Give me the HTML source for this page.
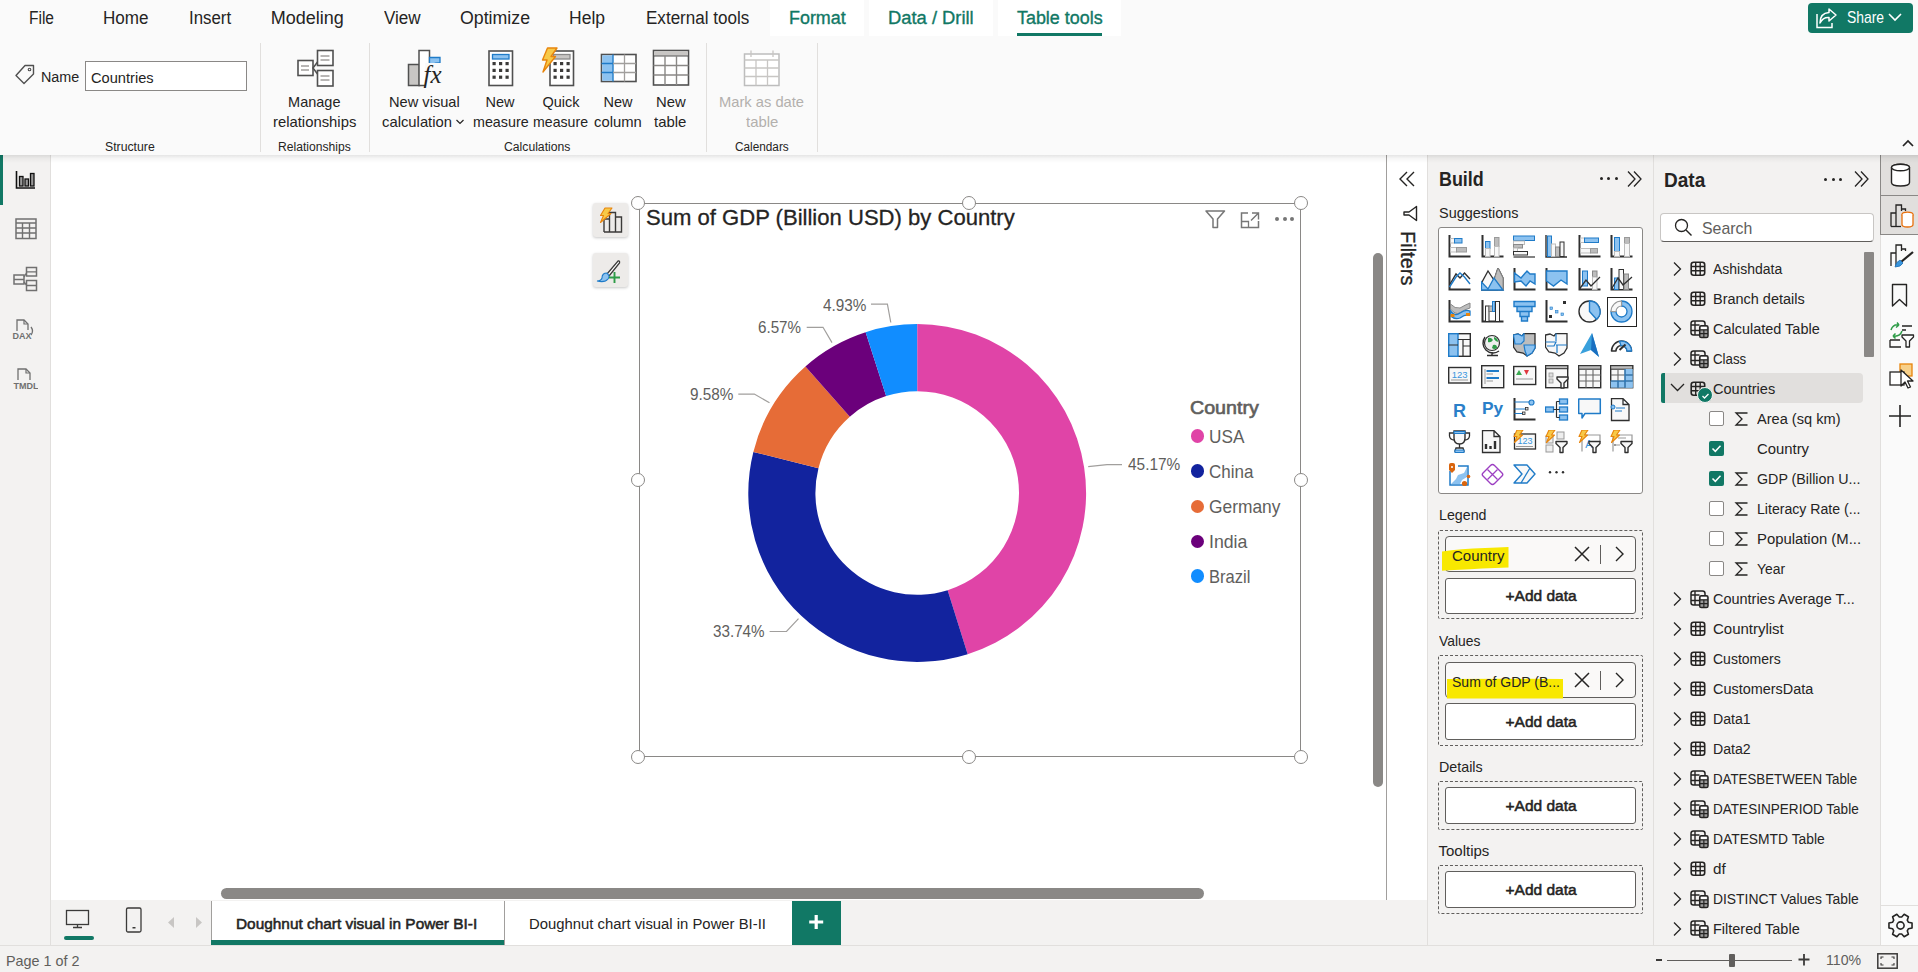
<!DOCTYPE html><html><head><meta charset="utf-8"><style>html,body{margin:0;padding:0;width:1918px;height:972px;overflow:hidden;background:#fff;font-family:"Liberation Sans",sans-serif;position:relative}div,svg{box-sizing:border-box}</style></head><body>
<div style="position:absolute;left:0px;top:0px;width:1918px;height:155px;background:#FAFAFA;z-index:2"></div>
<div style="position:absolute;left:0;top:0;width:1918px;height:155px;z-index:3">
<div style="position:absolute;left:770px;top:0px;width:94px;height:36px;background:#fff"></div>
<div style="position:absolute;left:869px;top:0px;width:124px;height:36px;background:#fff"></div>
<div style="position:absolute;left:998px;top:0px;width:123px;height:36px;background:#fff"></div>
<div style="position:absolute;left:1017px;top:33px;width:85px;height:3px;background:#117865"></div>
<div style="position:absolute;left:29.00px;top:7.16px;font-size:18px;line-height:22px;white-space:nowrap;color:#252423;transform:scaleX(0.8620);transform-origin:0 0;">File</div>
<div style="position:absolute;left:102.50px;top:7.16px;font-size:18px;line-height:22px;white-space:nowrap;color:#252423;transform:scaleX(0.9477);transform-origin:0 0;">Home</div>
<div style="position:absolute;left:188.50px;top:7.16px;font-size:18px;line-height:22px;white-space:nowrap;color:#252423;transform:scaleX(0.9353);transform-origin:0 0;">Insert</div>
<div style="position:absolute;left:270.70px;top:7.16px;font-size:18px;line-height:22px;white-space:nowrap;color:#252423;">Modeling</div>
<div style="position:absolute;left:384.00px;top:7.16px;font-size:18px;line-height:22px;white-space:nowrap;color:#252423;transform:scaleX(0.9486);transform-origin:0 0;">View</div>
<div style="position:absolute;left:460.00px;top:7.16px;font-size:18px;line-height:22px;white-space:nowrap;color:#252423;transform:scaleX(0.9857);transform-origin:0 0;">Optimize</div>
<div style="position:absolute;left:569.00px;top:7.16px;font-size:18px;line-height:22px;white-space:nowrap;color:#252423;transform:scaleX(0.9725);transform-origin:0 0;">Help</div>
<div style="position:absolute;left:646.00px;top:7.16px;font-size:18px;line-height:22px;white-space:nowrap;color:#252423;transform:scaleX(0.9473);transform-origin:0 0;">External tools</div>
<div style="position:absolute;left:789.00px;top:7.16px;font-size:18px;line-height:22px;white-space:nowrap;color:#117865;transform:scaleX(0.9947);transform-origin:0 0;-webkit-text-stroke:0.35px #117865;">Format</div>
<div style="position:absolute;left:888.30px;top:7.16px;font-size:18px;line-height:22px;white-space:nowrap;color:#117865;transform:scaleX(1.0201);transform-origin:0 0;-webkit-text-stroke:0.35px #117865;">Data / Drill</div>
<div style="position:absolute;left:1016.70px;top:7.16px;font-size:18px;line-height:22px;white-space:nowrap;color:#117865;transform:scaleX(0.9948);transform-origin:0 0;-webkit-text-stroke:0.35px #117865;">Table tools</div>
<div style="position:absolute;left:260px;top:43px;width:1px;height:109px;background:#E1DFDD"></div>
<div style="position:absolute;left:369px;top:43px;width:1px;height:109px;background:#E1DFDD"></div>
<div style="position:absolute;left:706px;top:43px;width:1px;height:109px;background:#E1DFDD"></div>
<div style="position:absolute;left:817px;top:43px;width:1px;height:109px;background:#E1DFDD"></div>
<div style="position:absolute;left:40.70px;top:67.33px;font-size:15.5px;line-height:19px;white-space:nowrap;color:#252423;transform:scaleX(0.9264);transform-origin:0 0;">Name</div>
<div style="position:absolute;left:85px;top:61px;width:162px;height:30px;background:#fff;border:1px solid #8A8886"></div>
<div style="position:absolute;left:90.70px;top:68.33px;font-size:15.5px;line-height:19px;white-space:nowrap;color:#252423;transform:scaleX(0.9437);transform-origin:0 0;">Countries</div>
<div style="position:absolute;left:288.10px;top:92.98px;font-size:14.5px;line-height:18px;white-space:nowrap;color:#252423;">Manage</div>
<div style="position:absolute;left:272.70px;top:112.58px;font-size:14.5px;line-height:18px;white-space:nowrap;color:#252423;transform:scaleX(1.0233);transform-origin:0 0;">relationships</div>
<div style="position:absolute;left:389.30px;top:92.98px;font-size:14.5px;line-height:18px;white-space:nowrap;color:#252423;transform:scaleX(1.0085);transform-origin:0 0;">New visual</div>
<div style="position:absolute;left:382.30px;top:112.58px;font-size:14.5px;line-height:18px;white-space:nowrap;color:#252423;transform:scaleX(1.0217);transform-origin:0 0;">calculation</div>
<div style="position:absolute;left:485.50px;top:92.98px;font-size:14.5px;line-height:18px;white-space:nowrap;color:#252423;">New</div>
<div style="position:absolute;left:472.70px;top:112.58px;font-size:14.5px;line-height:18px;white-space:nowrap;color:#252423;transform:scaleX(0.9856);transform-origin:0 0;">measure</div>
<div style="position:absolute;left:542.47px;top:92.98px;font-size:14.5px;line-height:18px;white-space:nowrap;color:#252423;">Quick</div>
<div style="position:absolute;left:533.30px;top:112.58px;font-size:14.5px;line-height:18px;white-space:nowrap;color:#252423;transform:scaleX(0.9750);transform-origin:0 0;">measure</div>
<div style="position:absolute;left:603.50px;top:92.98px;font-size:14.5px;line-height:18px;white-space:nowrap;color:#252423;">New</div>
<div style="position:absolute;left:594.30px;top:112.58px;font-size:14.5px;line-height:18px;white-space:nowrap;color:#252423;transform:scaleX(1.0205);transform-origin:0 0;">column</div>
<div style="position:absolute;left:656.00px;top:92.98px;font-size:14.5px;line-height:18px;white-space:nowrap;color:#252423;transform:scaleX(1.0239);transform-origin:0 0;">New</div>
<div style="position:absolute;left:654.30px;top:112.58px;font-size:14.5px;line-height:18px;white-space:nowrap;color:#252423;transform:scaleX(1.0305);transform-origin:0 0;">table</div>
<div style="position:absolute;left:719.30px;top:92.98px;font-size:14.5px;line-height:18px;white-space:nowrap;color:#B3B0AD;transform:scaleX(1.0142);transform-origin:0 0;">Mark as date</div>
<div style="position:absolute;left:745.70px;top:112.58px;font-size:14.5px;line-height:18px;white-space:nowrap;color:#B3B0AD;transform:scaleX(1.0274);transform-origin:0 0;">table</div>
<div style="position:absolute;left:105.00px;top:138.67px;font-size:12.5px;line-height:16px;white-space:nowrap;color:#252423;transform:scaleX(0.9801);transform-origin:0 0;">Structure</div>
<div style="position:absolute;left:278.30px;top:138.67px;font-size:12.5px;line-height:16px;white-space:nowrap;color:#252423;transform:scaleX(0.9688);transform-origin:0 0;">Relationships</div>
<div style="position:absolute;left:504.30px;top:138.67px;font-size:12.5px;line-height:16px;white-space:nowrap;color:#252423;transform:scaleX(0.9752);transform-origin:0 0;">Calculations</div>
<div style="position:absolute;left:735.00px;top:138.67px;font-size:12.5px;line-height:16px;white-space:nowrap;color:#252423;transform:scaleX(0.9426);transform-origin:0 0;">Calendars</div>
<div style="position:absolute;left:1808px;top:3px;width:105px;height:30px;background:#117865;border-radius:4px"></div>
<div style="position:absolute;left:1846.60px;top:7.11px;font-size:17px;line-height:21px;white-space:nowrap;color:#fff;transform:scaleX(0.8179);transform-origin:0 0;">Share</div>
<svg style="position:absolute;left:14px;top:64px;" width="22" height="22" viewBox="0 0 22 22"><path d="M11,1.5 H19.5 V10 L10,19.5 L2,11.5 Z" fill="none" stroke="#505050" stroke-width="1.4" stroke-linejoin="round" transform="rotate(0)"/><circle cx="15.5" cy="5.5" r="1.3" fill="none" stroke="#505050" stroke-width="1.1"/><path d="M4,13.5 L12,5.5 M6,15.5 L14,7.5" stroke="#505050" stroke-width="0" /></svg>
<svg style="position:absolute;left:296px;top:49px;" width="39" height="39" viewBox="0 0 39 39"><rect x="2" y="11.5" width="15" height="15" fill="#fff" stroke="#505050" stroke-width="1.6"/><rect x="21.5" y="1.5" width="15.5" height="15" fill="#fff" stroke="#505050" stroke-width="1.6"/><rect x="21.5" y="21.5" width="15.5" height="15.5" fill="#fff" stroke="#505050" stroke-width="1.6"/><path d="M5,17 H13 M5,21 H13 M24.5,7 H33.5 M24.5,11 H33.5 M24.5,27 H33.5 M24.5,31 H33.5" stroke="#A19F9D" stroke-width="1.4"/><path d="M21.5,13 L17,19 L21.5,25" fill="none" stroke="#505050" stroke-width="1.5"/></svg>
<svg style="position:absolute;left:406px;top:48px;" width="40" height="40" viewBox="0 0 40 40"><rect x="2.5" y="16.5" width="11" height="21" fill="#C8C6C4" stroke="#505050" stroke-width="1.5"/><rect x="13" y="2.5" width="10.5" height="35" fill="#fff" stroke="#505050" stroke-width="1.5"/><path d="M23.5,9.5 H34 V15 Q28,14 23.5,19 Z" fill="#8CC2F0" stroke="#1F7BC8" stroke-width="1.3"/><rect x="19" y="15" width="21" height="25" fill="#FAFAFA"/><text x="17.5" y="34.5" font-family="Liberation Serif" font-style="italic" font-size="25" fill="#252423">fx</text></svg>
<svg style="position:absolute;left:487.5px;top:49.5px;" width="26" height="37" viewBox="0 0 26 37"><rect x="1" y="1" width="23.5" height="34.5" fill="#fff" stroke="#505050" stroke-width="1.6"/><rect x="4.5" y="4.5" width="16.5" height="4.5" fill="#8CC2F0" stroke="#1F7BC8" stroke-width="1.3"/><rect x="4.5" y="12.0" width="3.2" height="3.2" fill="#3B3A39"/><rect x="11.0" y="12.0" width="3.2" height="3.2" fill="#3B3A39"/><rect x="17.5" y="12.0" width="3.2" height="3.2" fill="#3B3A39"/><rect x="4.5" y="18.8" width="3.2" height="3.2" fill="#3B3A39"/><rect x="11.0" y="18.8" width="3.2" height="3.2" fill="#3B3A39"/><rect x="17.5" y="18.8" width="3.2" height="3.2" fill="#3B3A39"/><rect x="4.5" y="25.6" width="3.2" height="3.2" fill="#3B3A39"/><rect x="11.0" y="25.6" width="3.2" height="3.2" fill="#3B3A39"/><rect x="17.5" y="25.6" width="3.2" height="3.2" fill="#3B3A39"/></svg>
<svg style="position:absolute;left:548.5px;top:49.5px;" width="26" height="37" viewBox="0 0 26 37"><rect x="1" y="1" width="23.5" height="34.5" fill="#fff" stroke="#505050" stroke-width="1.6"/><rect x="4.5" y="4.5" width="16.5" height="4.5" fill="#C8C6C4" stroke="#8a8a8a" stroke-width="1.3"/><rect x="4.5" y="12.0" width="3.2" height="3.2" fill="#3B3A39"/><rect x="11.0" y="12.0" width="3.2" height="3.2" fill="#3B3A39"/><rect x="17.5" y="12.0" width="3.2" height="3.2" fill="#3B3A39"/><rect x="4.5" y="18.8" width="3.2" height="3.2" fill="#3B3A39"/><rect x="11.0" y="18.8" width="3.2" height="3.2" fill="#3B3A39"/><rect x="17.5" y="18.8" width="3.2" height="3.2" fill="#3B3A39"/><rect x="4.5" y="25.6" width="3.2" height="3.2" fill="#3B3A39"/><rect x="11.0" y="25.6" width="3.2" height="3.2" fill="#3B3A39"/><rect x="17.5" y="25.6" width="3.2" height="3.2" fill="#3B3A39"/></svg>
<svg style="position:absolute;left:541px;top:47px;" width="18" height="27" viewBox="0 0 18 27"><path d="M6.5,1 H16 L10,9.5 H14.5 L2,25 L6,13 H1.5 Z" fill="#F7C948" stroke="#E8850C" stroke-width="1.4" stroke-linejoin="round"/></svg>
<svg style="position:absolute;left:600px;top:53px;" width="38" height="30" viewBox="0 0 38 30"><rect x="1.5" y="1.5" width="34.5" height="27" fill="#fff" stroke="#505050" stroke-width="1.6"/><rect x="2.3" y="2.3" width="10.5" height="25.5" fill="#8CC2F0"/><path d="M13,1.5 V28.5" stroke="#1F7BC8" stroke-width="1.4"/><path d="M1.5,10.5 H13 M1.5,19.5 H13" stroke="#1F7BC8" stroke-width="1.4"/><path d="M13,10.5 H36 M13,19.5 H36 M24.5,1.5 V28.5" stroke="#A19F9D" stroke-width="1.3"/></svg>
<svg style="position:absolute;left:652px;top:49px;" width="38" height="38" viewBox="0 0 38 38"><rect x="1.5" y="1.5" width="35" height="34.5" fill="#fff" stroke="#505050" stroke-width="1.6"/><rect x="2.3" y="2.3" width="33.5" height="4.5" fill="#C8C6C4"/><path d="M1.5,7 H36.5" stroke="#505050" stroke-width="1.2"/><path d="M1.5,16.5 H36.5 M1.5,26 H36.5 M13,7 V36 M24.5,7 V36" stroke="#8A8886" stroke-width="1.4"/></svg>
<svg style="position:absolute;left:743px;top:49px;" width="38" height="38" viewBox="0 0 38 38"><rect x="1.5" y="5" width="34.5" height="31.5" fill="#fff" stroke="#BDBDBD" stroke-width="1.5"/><path d="M1.5,11 H36 M1.5,19 H36 M1.5,27.5 H36 M13,11 V36.5 M24.5,11 V36.5 M8,1.5 V8 M30,1.5 V8" stroke="#C8C6C4" stroke-width="1.3"/></svg>
<svg style="position:absolute;left:455px;top:118px;" width="10" height="8" viewBox="0 0 10 8"><path d="M1.5,2 L5,5.5 L8.5,2" fill="none" stroke="#252423" stroke-width="1.2"/></svg>
<svg style="position:absolute;left:1815px;top:6px;" width="24" height="24" viewBox="0 0 24 24"><path d="M2,8 V21.5 H17 V17" fill="none" stroke="#fff" stroke-width="1.5"/><path d="M14,3 L21,9 L14,15 V11.5 Q8,11 5,17 Q5,7 14,6.5 Z" fill="none" stroke="#fff" stroke-width="1.5" stroke-linejoin="round"/></svg>
<svg style="position:absolute;left:1887px;top:12px;" width="16" height="10" viewBox="0 0 16 10"><path d="M2,2 L8,8 L14,2" fill="none" stroke="#fff" stroke-width="1.6"/></svg>
<svg style="position:absolute;left:1901px;top:138px;" width="14" height="10" viewBox="0 0 14 10"><path d="M2,8 L7,3 L12,8" fill="none" stroke="#252423" stroke-width="1.7"/></svg>
</div>
<div style="position:absolute;left:0px;top:155px;width:51px;height:790px;background:#F3F2F1;border-right:1px solid #E1DFDD"></div>
<div style="position:absolute;left:0px;top:155px;width:3px;height:50px;background:#117865"></div>
<svg style="position:absolute;left:15px;top:170px;" width="21" height="20" viewBox="0 0 21 20"><path d="M1.5,1 V18 H20" fill="none" stroke="#111" stroke-width="1.6"/><rect x="4.5" y="6.5" width="3.5" height="9.5" fill="#999" stroke="#111" stroke-width="1.3"/><rect x="10" y="9" width="3.5" height="7" fill="#999" stroke="#111" stroke-width="1.3"/><rect x="15.5" y="3.5" width="3.5" height="12.5" fill="#999" stroke="#111" stroke-width="1.3"/></svg>
<svg style="position:absolute;left:15px;top:218px;" width="22" height="22" viewBox="0 0 22 22"><rect x="1" y="1" width="20" height="19.5" fill="none" stroke="#707070" stroke-width="1.5"/><path d="M1,5 H21 M1,10 H21 M1,15 H21 M7.5,5 V20.5 M14.5,5 V20.5" stroke="#707070" stroke-width="1.4"/></svg>
<svg style="position:absolute;left:13px;top:266px;" width="26" height="26" viewBox="0 0 26 26"><rect x="1" y="9" width="10" height="9" fill="none" stroke="#707070" stroke-width="1.5"/><rect x="13.5" y="1.5" width="10" height="8.5" fill="none" stroke="#707070" stroke-width="1.5"/><rect x="13.5" y="14.5" width="10" height="10" fill="none" stroke="#707070" stroke-width="1.5"/><path d="M1,13.5 H11 M13.5,5.8 H23.5 M13.5,19.5 H23.5 M11,11 L13.5,7 M11,16 L13.5,19" stroke="#707070" stroke-width="1.3"/></svg>
<svg style="position:absolute;left:12px;top:318px;" width="24" height="22" viewBox="0 0 24 22"><path d="M5,13 V2 H12 L16,6 V12" fill="none" stroke="#707070" stroke-width="1.3"/><path d="M12,2 V6 H16" fill="none" stroke="#707070" stroke-width="1.2"/><path d="M19,9 Q22,13 19,17" fill="none" stroke="#707070" stroke-width="1.3"/><text x="0.5" y="21" font-family="Liberation Sans" font-weight="bold" font-size="9" fill="#707070">DAX</text></svg>
<svg style="position:absolute;left:13px;top:361px;" width="25" height="30" viewBox="0 0 25 30"><path d="M5,19 V8 H13 L17,12 V19" fill="none" stroke="#707070" stroke-width="1.3"/><path d="M13,8 V12 H17" fill="none" stroke="#707070" stroke-width="1.2"/><text x="0.5" y="28" font-family="Liberation Sans" font-weight="bold" font-size="9" fill="#707070">TMDL</text></svg>
<div style="position:absolute;left:51px;top:900px;width:1376px;height:45px;background:#F3F2F1"></div>
<div style="position:absolute;left:0px;top:945px;width:1918px;height:27px;background:#F3F2F1;border-top:1px solid #E1DFDD"></div>
<svg style="position:absolute;left:64px;top:908px;" width="28" height="22" viewBox="0 0 28 22"><rect x="2.5" y="2.5" width="22" height="14" fill="none" stroke="#3B3A39" stroke-width="1.3"/><path d="M13.5,16.5 V19.5 M9,19.5 H18" stroke="#3B3A39" stroke-width="1.3"/></svg>
<div style="position:absolute;left:64px;top:936px;width:30px;height:3.5px;background:#117865;border-radius:2px"></div>
<svg style="position:absolute;left:124px;top:906px;" width="19" height="28" viewBox="0 0 19 28"><rect x="2.5" y="2" width="14.5" height="24" rx="1.5" fill="none" stroke="#3B3A39" stroke-width="1.3"/><rect x="8.5" y="21" width="3" height="1.5" fill="#3B3A39"/></svg>
<svg style="position:absolute;left:166px;top:916px;" width="10" height="13" viewBox="0 0 10 13"><path d="M8,1 L2,6.5 L8,12 Z" fill="#C8C6C4"/></svg>
<svg style="position:absolute;left:194px;top:916px;" width="10" height="13" viewBox="0 0 10 13"><path d="M2,1 L8,6.5 L2,12 Z" fill="#C8C6C4"/></svg>
<div style="position:absolute;left:210.5px;top:901px;width:293.0px;height:44px;background:#fff;border-left:1px solid #A19F9D"></div>
<div style="position:absolute;left:210.5px;top:940px;width:293.0px;height:5px;background:#117865"></div>
<div style="position:absolute;left:236.00px;top:913.93px;font-size:15.5px;line-height:19px;white-space:nowrap;color:#252423;transform:scaleX(0.9928);transform-origin:0 0;-webkit-text-stroke:0.55px #252423;">Doughnut chart visual in Power BI-I</div>
<div style="position:absolute;left:503.5px;top:901px;width:288.0px;height:44px;background:#fff;border-left:1px solid #A19F9D"></div>
<div style="position:absolute;left:528.90px;top:913.93px;font-size:15.5px;line-height:19px;white-space:nowrap;color:#252423;transform:scaleX(0.9582);transform-origin:0 0;">Doughnut chart visual in Power BI-II</div>
<div style="position:absolute;left:791.5px;top:901px;width:49.5px;height:44px;background:#117865"></div>
<svg style="position:absolute;left:806px;top:912px;" width="20" height="20" viewBox="0 0 20 20"><path d="M10.2,3 V17 M3.2,10 H17.2" stroke="#fff" stroke-width="3.2"/></svg>
<div style="position:absolute;left:1656px;top:959px;width:5.5px;height:2px;background:#3B3A39"></div>
<div style="position:absolute;left:1667px;top:959.5px;width:125px;height:1.5px;background:#605E5C"></div>
<div style="position:absolute;left:1729px;top:954px;width:5.5px;height:13px;background:#605E5C;border-radius:1px"></div>
<svg style="position:absolute;left:1798px;top:953px;" width="12" height="13" viewBox="0 0 12 13"><path d="M6,1 V12.5 M0.5,6.5 H11.5" stroke="#3B3A39" stroke-width="1.8"/></svg>
<div style="position:absolute;left:1826.20px;top:950.30px;font-size:15px;line-height:19px;white-space:nowrap;color:#605E5C;transform:scaleX(0.9423);transform-origin:0 0;">110%</div>
<svg style="position:absolute;left:1877px;top:953px;" width="21" height="16" viewBox="0 0 21 16"><rect x="0.8" y="0.8" width="19.4" height="14.4" fill="none" stroke="#3B3A39" stroke-width="1.5"/><path d="M4,6 V4 H6.5 M14.5,4 H17 V6 M17,10 V12 H14.5 M6.5,12 H4 V10" fill="none" stroke="#3B3A39" stroke-width="1.1"/></svg>
<div style="position:absolute;left:5.50px;top:952.48px;font-size:14.5px;line-height:18px;white-space:nowrap;color:#605E5C;transform:scaleX(0.9910);transform-origin:0 0;">Page 1 of 2</div>
<svg style="position:absolute;left:0px;top:0px;" width="1918" height="972" viewBox="0 0 1918 972"><path d="M917.20,324.10 A168.9,168.9 0 0 1 967.67,654.18 L947.62,590.15 A101.8,101.8 0 0 0 917.20,391.20 Z" fill="#E044A7"/><path d="M967.67,654.18 A168.9,168.9 0 0 1 753.37,451.92 L818.46,468.24 A101.8,101.8 0 0 0 947.62,590.15 Z" fill="#12239E"/><path d="M753.37,451.92 A168.9,168.9 0 0 1 805.42,366.38 L849.83,416.68 A101.8,101.8 0 0 0 818.46,468.24 Z" fill="#E66C37"/><path d="M805.42,366.38 A168.9,168.9 0 0 1 865.61,332.17 L886.11,396.06 A101.8,101.8 0 0 0 849.83,416.68 Z" fill="#6B007B"/><path d="M865.61,332.17 A168.9,168.9 0 0 1 917.09,324.10 L917.14,391.20 A101.8,101.8 0 0 0 886.11,396.06 Z" fill="#118DFF"/><polyline points="871,304.2 887.4,304.2 890.8,322.5" fill="none" stroke="#A19F9D" stroke-width="1.2"/><polyline points="806.7,327.3 823,327.3 832,342.6" fill="none" stroke="#A19F9D" stroke-width="1.2"/><polyline points="738.3,394.1 754.3,394.1 769.5,402.8" fill="none" stroke="#A19F9D" stroke-width="1.2"/><polyline points="769.6,631.5 786.5,631.5 798.5,618.7" fill="none" stroke="#A19F9D" stroke-width="1.2"/><polyline points="1088.2,466.7 1107,464.6 1122,464.6" fill="none" stroke="#A19F9D" stroke-width="1.2"/></svg>
<div style="position:absolute;left:822.60px;top:296.16px;font-size:16px;line-height:20px;white-space:nowrap;color:#605E5C;transform:scaleX(0.9567);transform-origin:0 0;">4.93%</div>
<div style="position:absolute;left:758.00px;top:318.06px;font-size:16px;line-height:20px;white-space:nowrap;color:#605E5C;transform:scaleX(0.9479);transform-origin:0 0;">6.57%</div>
<div style="position:absolute;left:689.50px;top:385.36px;font-size:16px;line-height:20px;white-space:nowrap;color:#605E5C;transform:scaleX(0.9567);transform-origin:0 0;">9.58%</div>
<div style="position:absolute;left:1127.50px;top:455.46px;font-size:16px;line-height:20px;white-space:nowrap;color:#605E5C;transform:scaleX(0.9638);transform-origin:0 0;">45.17%</div>
<div style="position:absolute;left:712.50px;top:622.16px;font-size:16px;line-height:20px;white-space:nowrap;color:#605E5C;transform:scaleX(0.9509);transform-origin:0 0;">33.74%</div>
<div style="position:absolute;left:1190.20px;top:396.74px;font-size:17.5px;line-height:22px;white-space:nowrap;color:#605E5C;transform:scaleX(1.1229);transform-origin:0 0;-webkit-text-stroke:0.6px #605E5C;">Country</div>
<div style="position:absolute;left:1191.1px;top:429.3px;width:13.4px;height:13.4px;border-radius:50%;background:#E044A7"></div>
<div style="position:absolute;left:1208.60px;top:424.89px;font-size:18.5px;line-height:23px;white-space:nowrap;color:#605E5C;transform:scaleX(0.9306);transform-origin:0 0;">USA</div>
<div style="position:absolute;left:1191.1px;top:464.3px;width:13.4px;height:13.4px;border-radius:50%;background:#12239E"></div>
<div style="position:absolute;left:1208.60px;top:459.89px;font-size:18.5px;line-height:23px;white-space:nowrap;color:#605E5C;transform:scaleX(0.9186);transform-origin:0 0;">China</div>
<div style="position:absolute;left:1191.1px;top:499.6px;width:13.4px;height:13.4px;border-radius:50%;background:#E66C37"></div>
<div style="position:absolute;left:1208.60px;top:495.19px;font-size:18.5px;line-height:23px;white-space:nowrap;color:#605E5C;transform:scaleX(0.9386);transform-origin:0 0;">Germany</div>
<div style="position:absolute;left:1191.1px;top:534.5999999999999px;width:13.4px;height:13.4px;border-radius:50%;background:#6B007B"></div>
<div style="position:absolute;left:1208.60px;top:530.19px;font-size:18.5px;line-height:23px;white-space:nowrap;color:#605E5C;transform:scaleX(0.9573);transform-origin:0 0;">India</div>
<div style="position:absolute;left:1191.1px;top:569.1999999999999px;width:13.4px;height:13.4px;border-radius:50%;background:#118DFF"></div>
<div style="position:absolute;left:1208.60px;top:564.79px;font-size:18.5px;line-height:23px;white-space:nowrap;color:#605E5C;transform:scaleX(0.8950);transform-origin:0 0;">Brazil</div>
<div style="position:absolute;left:646.25px;top:203.67px;font-size:22.3px;line-height:28px;white-space:nowrap;color:#252423;transform:scaleX(0.9897);transform-origin:0 0;-webkit-text-stroke:0.3px #252423;">Sum of GDP (Billion USD) by Country</div>
<div style="position:absolute;left:638.5px;top:203px;width:662.5px;height:554px;border:1.3px solid #8A8886"></div>
<div style="position:absolute;left:631px;top:196px;width:14px;height:14px;border-radius:50%;background:#fff;border:1.2px solid #8A8886"></div>
<div style="position:absolute;left:631px;top:473px;width:14px;height:14px;border-radius:50%;background:#fff;border:1.2px solid #8A8886"></div>
<div style="position:absolute;left:631px;top:750px;width:14px;height:14px;border-radius:50%;background:#fff;border:1.2px solid #8A8886"></div>
<div style="position:absolute;left:962px;top:196px;width:14px;height:14px;border-radius:50%;background:#fff;border:1.2px solid #8A8886"></div>
<div style="position:absolute;left:962px;top:750px;width:14px;height:14px;border-radius:50%;background:#fff;border:1.2px solid #8A8886"></div>
<div style="position:absolute;left:1294px;top:196px;width:14px;height:14px;border-radius:50%;background:#fff;border:1.2px solid #8A8886"></div>
<div style="position:absolute;left:1294px;top:473px;width:14px;height:14px;border-radius:50%;background:#fff;border:1.2px solid #8A8886"></div>
<div style="position:absolute;left:1294px;top:750px;width:14px;height:14px;border-radius:50%;background:#fff;border:1.2px solid #8A8886"></div>
<div style="position:absolute;left:593px;top:203px;width:34.5px;height:34px;background:#EDEBE9;border-radius:3px;box-shadow:0 1px 3px rgba(0,0,0,0.22)"></div>
<div style="position:absolute;left:593px;top:253px;width:34.5px;height:34px;background:#EDEBE9;border-radius:3px;box-shadow:0 1px 3px rgba(0,0,0,0.22)"></div>
<svg style="position:absolute;left:1205px;top:210px;" width="21" height="19" viewBox="0 0 21 19"><path d="M1,1 H19.5 L12.5,9 V17.5 H8 V9 Z" fill="none" stroke="#767676" stroke-width="1.5" stroke-linejoin="round"/></svg>
<svg style="position:absolute;left:1240px;top:211px;" width="20" height="18" viewBox="0 0 20 18"><path d="M8,2 H1.5 V16.5 H18.5 V10" fill="none" stroke="#767676" stroke-width="1.5"/><path d="M1.5,10.5 H8.5 V16.5" fill="none" stroke="#767676" stroke-width="1.3"/><path d="M12,2 H18.5 V8.5 M18.5,2 L11,9.5" fill="none" stroke="#767676" stroke-width="1.4"/></svg>
<div style="position:absolute;left:1275.0px;top:217px;width:4px;height:4px;border-radius:50%;background:#767676"></div>
<div style="position:absolute;left:1282.5px;top:217px;width:4px;height:4px;border-radius:50%;background:#767676"></div>
<div style="position:absolute;left:1290.0px;top:217px;width:4px;height:4px;border-radius:50%;background:#767676"></div>
<svg style="position:absolute;left:596px;top:207px;" width="30" height="28" viewBox="0 0 30 28"><path d="M8,25 V12 H13.5 V25 M13.5,25 V5.5 H19.5 V25 M19.5,25 V10 H25.5 V25 Z M8,25 H25.5" fill="none" stroke="#3B3A39" stroke-width="1.4"/><path d="M9,1 H16 L12,6.5 H15 L4.5,15.5 L7.5,8.5 H4.5 Z" fill="#F7C948" stroke="#E8850C" stroke-width="1.1" stroke-linejoin="round"/></svg>
<svg style="position:absolute;left:596px;top:259px;" width="30" height="26" viewBox="0 0 30 26"><path d="M11,15 L22,2 Q24,1.5 23.5,4 L13,17" fill="#fff" stroke="#3B3A39" stroke-width="1.3"/><path d="M11,14 Q6,14 6,19 Q5,22 1,22 Q9,24 12,20 Q14,17 12.5,16 Z" fill="#8CC2F0" stroke="#1F7BC8" stroke-width="1.1"/><path d="M18.5,13 V24 M13,18.5 H24" stroke="#2E9C48" stroke-width="1.9"/></svg>
<div style="position:absolute;left:1373px;top:253px;width:10px;height:534px;background:#8A8886;border-radius:5px"></div>
<div style="position:absolute;left:221px;top:888px;width:983px;height:11px;background:#8A8886;border-radius:6px"></div>
<div style="position:absolute;left:1386px;top:155px;width:41px;height:745px;background:#fff;border-left:1px solid #A19F9D"></div>
<div style="position:absolute;left:1427px;top:155px;width:226px;height:790px;background:#F3F2F1;border-left:1px solid #E1DFDD"></div>
<div style="position:absolute;left:1653px;top:155px;width:227px;height:790px;background:#F3F2F1;border-left:1px solid #E1DFDD"></div>
<div style="position:absolute;left:1880px;top:155px;width:38px;height:790px;background:#FAFAFA;border-left:1px solid #E1DFDD"></div>
<svg style="position:absolute;left:1398px;top:170px;" width="20" height="18" viewBox="0 0 20 18"><path d="M9,2 L2,9 L9,16 M16,2 L9,9 L16,16" fill="none" stroke="#252423" stroke-width="1.4"/></svg>
<svg style="position:absolute;left:1402px;top:205px;" width="16" height="17" viewBox="0 0 16 17"><path d="M14.5,1.5 L14.5,15.5 L7,10 L2,10 L2,7 L7,7 Z" fill="none" stroke="#252423" stroke-width="1.4" stroke-linejoin="round"/></svg>
<div style="position:absolute;font-size:20px;line-height:24px;color:#252423;-webkit-text-stroke:0.35px #252423;transform:rotate(90deg);transform-origin:0 0;white-space:nowrap;left:1419.5px;top:231px">Filters</div>
<div style="position:absolute;left:1438.75px;top:167.47px;font-size:20px;line-height:25px;white-space:nowrap;color:#252423;font-weight:bold;transform:scaleX(0.8952);transform-origin:0 0;">Build</div>
<div style="position:absolute;left:1599.5px;top:177.3px;width:3px;height:3px;border-radius:50%;background:#252423"></div>
<div style="position:absolute;left:1607.1px;top:177.3px;width:3px;height:3px;border-radius:50%;background:#252423"></div>
<div style="position:absolute;left:1614.7px;top:177.3px;width:3px;height:3px;border-radius:50%;background:#252423"></div>
<svg style="position:absolute;left:1625px;top:170px;" width="20" height="18" viewBox="0 0 20 18"><path d="M3,1.5 L10,9 L3,16.5 M9,1.5 L16,9 L9,16.5" fill="none" stroke="#252423" stroke-width="1.3"/></svg>
<div style="position:absolute;left:1438.50px;top:203.05px;font-size:15px;line-height:19px;white-space:nowrap;color:#252423;transform:scaleX(0.9630);transform-origin:0 0;">Suggestions</div>
<div style="position:absolute;left:1438px;top:227px;width:205px;height:267px;background:#fff;border:1px solid #8A8886;border-radius:3px"></div>
<svg style="position:absolute;left:1448.0px;top:235.0px;" width="24" height="24" viewBox="0 0 24 24"><path d="M1.5,0 V21.5 H22.5" fill="none" stroke="#2F2F2F" stroke-width="2"/><rect x="2.5" y="3.5" width="4" height="4.5" fill="#F8F8F8" stroke="#BDBDBD" stroke-width="1"/><rect x="6.5" y="3.5" width="7.5" height="4.5" fill="#8CC2F0" stroke="#1F7BC8" stroke-width="1"/><rect x="2.5" y="12.5" width="6" height="4.5" fill="#F8F8F8" stroke="#BDBDBD" stroke-width="1"/><rect x="8.5" y="12.5" width="10" height="4.5" fill="#BDBDBD" stroke="#9a9a9a" stroke-width="1"/></svg>
<svg style="position:absolute;left:1480.5px;top:235.0px;" width="24" height="24" viewBox="0 0 24 24"><path d="M1.5,0 V21.5 H22.5" fill="none" stroke="#2F2F2F" stroke-width="2"/><rect x="4.5" y="6.5" width="4.5" height="7" fill="#8CC2F0" stroke="#1F7BC8" stroke-width="1"/><rect x="4.5" y="13.5" width="4.5" height="8" fill="#F8F8F8" stroke="#BDBDBD" stroke-width="1"/><rect x="13.5" y="2.5" width="4.5" height="9" fill="#BDBDBD" stroke="#9a9a9a" stroke-width="1"/><rect x="13.5" y="11.5" width="4.5" height="10" fill="#F8F8F8" stroke="#BDBDBD" stroke-width="1"/></svg>
<svg style="position:absolute;left:1512.9px;top:235.0px;" width="24" height="24" viewBox="0 0 24 24"><path d="M0.5,22 H22" stroke="#2F2F2F" stroke-width="1.2"/><rect x="0.5" y="1" width="21" height="4.5" fill="#8CC2F0" stroke="#1F7BC8" stroke-width="1"/><rect x="0.5" y="6" width="11" height="3.5" fill="#F8F8F8" stroke="#BDBDBD" stroke-width="1"/><rect x="0.5" y="9.5" width="9" height="3.5" fill="#BDBDBD" stroke="#8a8a8a" stroke-width="1"/><rect x="0.5" y="13" width="4" height="3.5" fill="#F8F8F8" stroke="#BDBDBD" stroke-width="1"/><rect x="0.5" y="16.5" width="14" height="3.5" fill="#F8F8F8" stroke="#2F2F2F" stroke-width="1"/></svg>
<svg style="position:absolute;left:1545.3px;top:235.0px;" width="24" height="24" viewBox="0 0 24 24"><path d="M1,0 V22 H22" fill="none" stroke="#2F2F2F" stroke-width="1.4"/><rect x="2.5" y="1" width="4" height="20.5" fill="#8CC2F0" stroke="#1F7BC8" stroke-width="1"/><rect x="6.5" y="9" width="4" height="12.5" fill="#F8F8F8" stroke="#BDBDBD" stroke-width="1"/><rect x="10.5" y="12" width="4" height="9.5" fill="#BDBDBD" stroke="#8a8a8a" stroke-width="1"/><rect x="15" y="7" width="4" height="14.5" fill="#F8F8F8" stroke="#2F2F2F" stroke-width="1"/></svg>
<svg style="position:absolute;left:1577.8px;top:235.0px;" width="24" height="24" viewBox="0 0 24 24"><path d="M1.5,0 V21.5 H22.5" fill="none" stroke="#2F2F2F" stroke-width="2"/><rect x="2.5" y="3" width="4" height="4.5" fill="#F8F8F8" stroke="#BDBDBD" stroke-width="1"/><rect x="6.5" y="3" width="14" height="4.5" fill="#8CC2F0" stroke="#1F7BC8" stroke-width="1"/><rect x="2.5" y="13.5" width="10" height="4.5" fill="#F8F8F8" stroke="#BDBDBD" stroke-width="1"/><rect x="12.5" y="13.5" width="7" height="4.5" fill="#BDBDBD" stroke="#9a9a9a" stroke-width="1"/></svg>
<svg style="position:absolute;left:1610.2px;top:235.0px;" width="24" height="24" viewBox="0 0 24 24"><path d="M1.5,0 V21.5 H22.5" fill="none" stroke="#2F2F2F" stroke-width="2"/><rect x="4.5" y="2.5" width="5" height="14" fill="#8CC2F0" stroke="#1F7BC8" stroke-width="1"/><rect x="4.5" y="16.5" width="5" height="5" fill="#F8F8F8" stroke="#BDBDBD" stroke-width="1"/><rect x="14.5" y="2.5" width="5" height="6" fill="#BDBDBD" stroke="#9a9a9a" stroke-width="1"/><rect x="14.5" y="8.5" width="5" height="13" fill="#F8F8F8" stroke="#BDBDBD" stroke-width="1"/></svg>
<svg style="position:absolute;left:1448.0px;top:267.5px;" width="24" height="24" viewBox="0 0 24 24"><path d="M1.5,0 V21.5 H22.5" fill="none" stroke="#2F2F2F" stroke-width="2"/><polyline points="1.5,17 8,6 12,10 16.5,5 22,11" fill="none" stroke="#2F2F2F" stroke-width="1.4"/><polyline points="1.5,19 8,9 12,5 16.5,9 22,16" fill="none" stroke="#1F7BC8" stroke-width="1.4"/></svg>
<svg style="position:absolute;left:1480.5px;top:267.5px;" width="24" height="24" viewBox="0 0 24 24"><path d="M0.5,22 V15 L7,3 L13,12 L17,0 L22,10 V22 Z" fill="#F8F8F8" stroke="#2F2F2F" stroke-width="1.3"/><path d="M13,12 L17,0 L22,10 V22 H17 Z" fill="#BDBDBD" stroke="#888" stroke-width="1"/><path d="M0.5,22 V14 L7,21 L13,10 L22,22 Z" fill="#8CC2F0" stroke="#1F7BC8" stroke-width="1.3"/></svg>
<svg style="position:absolute;left:1512.9px;top:267.5px;" width="24" height="24" viewBox="0 0 24 24"><path d="M1.5,0 V21.5 H22.5" fill="none" stroke="#2F2F2F" stroke-width="2"/><path d="M1.5,5 L8,10 L14,3 L17,6 L22,6 V16 L17,13 L13,18 L8,13 L1.5,14 Z" fill="#8CC2F0" stroke="#1F7BC8" stroke-width="1.4"/></svg>
<svg style="position:absolute;left:1545.3px;top:267.5px;" width="24" height="24" viewBox="0 0 24 24"><path d="M1.5,0 V21.5 H22.5" fill="none" stroke="#2F2F2F" stroke-width="2"/><path d="M1.5,3 H22 V16 L16,12 L8.5,18 L1.5,13 Z" fill="#8CC2F0" stroke="#1F7BC8" stroke-width="1.4"/></svg>
<svg style="position:absolute;left:1577.8px;top:267.5px;" width="24" height="24" viewBox="0 0 24 24"><path d="M1.5,0 V21.5 H22.5" fill="none" stroke="#2F2F2F" stroke-width="2"/><rect x="4.5" y="3" width="5" height="15" fill="#8CC2F0" stroke="#1F7BC8" stroke-width="1"/><rect x="14.5" y="3" width="4.5" height="6" fill="#BDBDBD" stroke="#888" stroke-width="1"/><rect x="14.5" y="9" width="4.5" height="12.5" fill="#F8F8F8" stroke="#BDBDBD" stroke-width="1"/><polyline points="1.5,21 8,12 13,18 22,9" fill="none" stroke="#2F2F2F" stroke-width="1.3"/></svg>
<svg style="position:absolute;left:1610.2px;top:267.5px;" width="24" height="24" viewBox="0 0 24 24"><path d="M1.5,0 V21.5 H22.5" fill="none" stroke="#2F2F2F" stroke-width="2"/><rect x="4.5" y="10" width="4.5" height="11.5" fill="#8CC2F0" stroke="#1F7BC8" stroke-width="1"/><rect x="9" y="1.5" width="4.5" height="20" fill="#F8F8F8" stroke="#2F2F2F" stroke-width="1"/><rect x="14" y="6" width="4.5" height="15.5" fill="#BDBDBD" stroke="#888" stroke-width="1"/><polyline points="1.5,21 8,10 13,17 22,9" fill="none" stroke="#2F2F2F" stroke-width="1.3"/></svg>
<svg style="position:absolute;left:1448.0px;top:300.0px;" width="24" height="24" viewBox="0 0 24 24"><path d="M1.5,0 V21.5 H22.5" fill="none" stroke="#2F2F2F" stroke-width="2"/><path d="M2.5,4 Q7,9 12,8 Q17,5 22,3 V8 Q17,9 12,13 Q7,15 2.5,9 Z" fill="#BDBDBD" stroke="#888" stroke-width="1"/><path d="M2.5,11 Q7,17 12,13 Q17,9 22,11 V15 Q17,14 12,18 Q7,20 2.5,16 Z" fill="#8CC2F0" stroke="#1F7BC8" stroke-width="1.3"/><rect x="2.5" y="14" width="4" height="3" fill="#E8850C"/><rect x="18" y="13" width="4" height="3" fill="#E8850C"/></svg>
<svg style="position:absolute;left:1480.5px;top:300.0px;" width="24" height="24" viewBox="0 0 24 24"><path d="M1.5,0 V21.5 H22.5" fill="none" stroke="#2F2F2F" stroke-width="2"/><rect x="4.5" y="6" width="3.5" height="15.5" fill="#F8F8F8" stroke="#2F2F2F" stroke-width="1"/><rect x="8" y="6" width="3.5" height="5.5" fill="#BDBDBD" stroke="#777" stroke-width="1"/><rect x="11.5" y="1.5" width="2.5" height="10" fill="#8CC2F0" stroke="#1F7BC8" stroke-width="1"/><rect x="14.5" y="1.5" width="4" height="20" fill="#F8F8F8" stroke="#2F2F2F" stroke-width="1"/></svg>
<svg style="position:absolute;left:1512.9px;top:300.0px;" width="24" height="24" viewBox="0 0 24 24"><path d="M1,1.5 H22 V6.5 H1 Z M4,6.5 H19 V11.5 H4 Z M7,11.5 H16 V16.5 H7 Z M8.5,16.5 H14.5 V21 H8.5 Z" fill="#8CC2F0" stroke="#1F7BC8" stroke-width="1.4"/></svg>
<svg style="position:absolute;left:1545.3px;top:300.0px;" width="24" height="24" viewBox="0 0 24 24"><path d="M1.5,0 V21.5 H22.5" fill="none" stroke="#2F2F2F" stroke-width="2"/><rect x="18" y="1" width="3" height="3" fill="#2F2F2F"/><rect x="5" y="7" width="2.5" height="2.5" fill="#8CC2F0" stroke="#1F7BC8" stroke-width="0.6"/><rect x="10.5" y="10.5" width="2.5" height="2.5" fill="#8CC2F0" stroke="#1F7BC8" stroke-width="0.6"/><rect x="4" y="15" width="3" height="3" fill="#2F2F2F"/><rect x="16" y="13" width="2.5" height="2.5" fill="#8CC2F0" stroke="#1F7BC8" stroke-width="0.6"/></svg>
<svg style="position:absolute;left:1577.8px;top:300.0px;" width="24" height="24" viewBox="0 0 24 24"><circle cx="11.5" cy="11.5" r="10.5" fill="#F8F8F8" stroke="#2F2F2F" stroke-width="1.4"/><path d="M11.5,11.5 V1 A10.5,10.5 0 0 1 18.5,19.3 Z" fill="#8CC2F0" stroke="#1F7BC8" stroke-width="1.4"/></svg>
<svg style="position:absolute;left:1610.2px;top:300.0px;" width="24" height="24" viewBox="0 0 24 24"><circle cx="11.5" cy="11.5" r="8" fill="none" stroke="#8CC2F0" stroke-width="5"/><path d="M11.5,1 A10.5,10.5 0 1 1 1,11.5 H6 A5.5,5.5 0 1 0 11.5,6 Z" fill="#8CC2F0" stroke="#1F7BC8" stroke-width="1.3"/><path d="M11.5,1 A10.5,10.5 0 0 0 1,11.5 H6 A5.5,5.5 0 0 1 11.5,6 Z" fill="#F8F8F8" stroke="#999" stroke-width="1.1"/></svg>
<svg style="position:absolute;left:1448.0px;top:332.5px;" width="24" height="24" viewBox="0 0 24 24"><rect x="0.7" y="0.7" width="21.6" height="22.6" fill="#F8F8F8" stroke="#2F2F2F" stroke-width="1.4"/><rect x="0.7" y="0.7" width="9.3" height="22.6" fill="#8CC2F0" stroke="#1F7BC8" stroke-width="1.4"/><path d="M0.7,12 H10 M10,6.5 H22.3 M15,6.5 V23.3 M15,13 H22.3" stroke="#2F2F2F" stroke-width="1.2"/></svg>
<svg style="position:absolute;left:1480.5px;top:332.5px;" width="24" height="24" viewBox="0 0 24 24"><circle cx="11" cy="10" r="7.5" fill="#EFEFEF" stroke="#2F2F2F" stroke-width="1.2"/><path d="M7,5 Q10,4 12,7 Q10,10 7,9 Z M12,12 Q16,11 16,15 Q13,17 11,15 Z M13,4 Q17,5 17,9 Q15,9 13,6 Z" fill="#2E9C48"/><path d="M4,4 A10,10 0 0 0 18,18 M11,19 V22 M6,22.5 H17" fill="none" stroke="#2F2F2F" stroke-width="1.4"/></svg>
<svg style="position:absolute;left:1512.9px;top:332.5px;" width="24" height="24" viewBox="0 0 24 24"><path d="M0.5,2 L5,1 L9,3 L11,0.5 H22 V15 L19,20 L14,23 L10,20 L4,19 L0.5,14 Z" fill="#BDBDBD" stroke="#2F2F2F" stroke-width="1.3"/><path d="M0.5,2 L5,1 L9,3 L11,0.5 V8 L8,11 H2 Z" fill="#8CC2F0" stroke="#1F7BC8" stroke-width="1.2"/><path d="M11,12 H22 V15 L19,20 L14,23 L12,18 Z" fill="#8CC2F0" stroke="#1F7BC8" stroke-width="1.2"/></svg>
<svg style="position:absolute;left:1545.3px;top:332.5px;" width="24" height="24" viewBox="0 0 24 24"><path d="M0.5,2 L5,1 L9,3 L11,0.5 H22 V15 L19,20 L14,23 L10,20 L4,19 L0.5,14 Z" fill="#F8F8F8" stroke="#2F2F2F" stroke-width="1.3"/><path d="M0.5,9 H11 L9,13 H2 M11,0.5 V8 M11,12 H22 M12,12 L12,20" fill="none" stroke="#1F7BC8" stroke-width="1.2"/></svg>
<svg style="position:absolute;left:1577.8px;top:332.5px;" width="24" height="24" viewBox="0 0 24 24"><path d="M14,0 L21,24 L13,17 L2,21 Z" fill="#39A0DC"/><path d="M14,0 L21,24 L13,17 Z" fill="#1A6FC0"/></svg>
<svg style="position:absolute;left:1610.2px;top:332.5px;" width="24" height="24" viewBox="0 0 24 24"><path d="M1.5,18 A10,10 0 0 1 21.5,18 H17 A5.5,5.5 0 0 0 6,18 Z" fill="#F8F8F8" stroke="#2F2F2F" stroke-width="1.5" stroke-linejoin="round"/><path d="M9.5,8.3 A10,10 0 0 1 21.5,18 H17 A5.5,5.5 0 0 0 11,12.7 Z" fill="#8CC2F0" stroke="#1F7BC8" stroke-width="1.3"/><path d="M9.5,17 L15.5,11.5" stroke="#2F2F2F" stroke-width="2"/></svg>
<svg style="position:absolute;left:1448.0px;top:365.0px;" width="24" height="24" viewBox="0 0 24 24"><rect x="0.7" y="2.5" width="22" height="15.5" fill="#F8F8F8" stroke="#2F2F2F" stroke-width="1.4"/><text x="11.7" y="12.8" font-size="9.5" font-family="Liberation Sans" fill="#3A96DD" text-anchor="middle">123</text><path d="M3,15 H20" stroke="#999" stroke-width="1"/></svg>
<svg style="position:absolute;left:1480.5px;top:365.0px;" width="24" height="24" viewBox="0 0 24 24"><rect x="0.7" y="0.7" width="22" height="22" fill="#F8F8F8" stroke="#2F2F2F" stroke-width="1.4"/><path d="M4,4 V19" stroke="#999" stroke-width="1"/><path d="M5.5,6 H18 M5.5,13 H18" stroke="#1F7BC8" stroke-width="2"/><path d="M5.5,9 H12 M5.5,16 H12" stroke="#999" stroke-width="1"/></svg>
<svg style="position:absolute;left:1512.9px;top:365.0px;" width="24" height="24" viewBox="0 0 24 24"><rect x="0.7" y="1.5" width="22" height="18" fill="#F8F8F8" stroke="#2F2F2F" stroke-width="1.4"/><path d="M3,10 L6,5 L9,10 Z" fill="#3BAA52"/><path d="M11,5 H16 L13.5,10 Z" fill="#E0393E"/><path d="M3,14 H20" stroke="#999" stroke-width="1"/></svg>
<svg style="position:absolute;left:1545.3px;top:365.0px;" width="24" height="24" viewBox="0 0 24 24"><rect x="0.7" y="0.7" width="22" height="22" fill="#F8F8F8" stroke="#2F2F2F" stroke-width="1.4"/><rect x="0.7" y="0.7" width="22" height="3" fill="#BDBDBD" stroke="#2F2F2F" stroke-width="1"/><rect x="4" y="8" width="4" height="4" fill="#ddd" stroke="#999" stroke-width="0.8"/><rect x="4" y="14" width="4" height="4" fill="#ddd" stroke="#999" stroke-width="0.8"/><path transform="translate(11.5,11.5)" d="M0.5,0.5 H11.5 V2.5 L7.5,6.5 V11.5 H4.5 V6.5 L0.5,2.5 Z" fill="#F8F8F8" stroke="#2F2F2F" stroke-width="1.4" stroke-linejoin="round"/></svg>
<svg style="position:absolute;left:1577.8px;top:365.0px;" width="24" height="24" viewBox="0 0 24 24"><rect x="0.7" y="0.7" width="22" height="22" fill="#F8F8F8" stroke="#2F2F2F" stroke-width="1.4"/><rect x="0.7" y="0.7" width="22" height="3.5" fill="#BDBDBD" stroke="#2F2F2F" stroke-width="1"/><path d="M0.7,10 H22.7 M0.7,16 H22.7 M8,4 V22.7 M15,4 V22.7" stroke="#666" stroke-width="1.1"/></svg>
<svg style="position:absolute;left:1610.2px;top:365.0px;" width="24" height="24" viewBox="0 0 24 24"><rect x="0.7" y="0.7" width="22" height="22" fill="#F8F8F8" stroke="#2F2F2F" stroke-width="1.4"/><rect x="0.7" y="0.7" width="22" height="3.5" fill="#BDBDBD" stroke="#2F2F2F" stroke-width="1"/><rect x="15" y="4" width="7.7" height="18.7" fill="#8CC2F0"/><rect x="0.7" y="16" width="22" height="6.7" fill="#8CC2F0"/><path d="M0.7,10 H22.7 M0.7,16 H22.7 M8,4 V22.7 M15,4 V22.7" stroke="#666" stroke-width="1.1"/><path d="M15,10 H22.7 M15,16 H22.7 M0.7,16 H22.7 M8,16 V22.7 M15,4 V22.7" stroke="#1F7BC8" stroke-width="1.1"/></svg>
<svg style="position:absolute;left:1448.0px;top:397.5px;" width="24" height="24" viewBox="0 0 24 24"><text x="11.5" y="19" font-size="18" font-weight="bold" font-family="Liberation Sans" fill="#2A7FC9" text-anchor="middle">R</text></svg>
<svg style="position:absolute;left:1480.5px;top:397.5px;" width="24" height="24" viewBox="0 0 24 24"><text x="11.5" y="16.5" font-size="17" font-weight="bold" font-family="Liberation Sans" fill="#2A7FC9" text-anchor="middle" transform="translate(11.5,0) scale(1.02,1) translate(-11.5,0)">Py</text></svg>
<svg style="position:absolute;left:1512.9px;top:397.5px;" width="24" height="24" viewBox="0 0 24 24"><path d="M1.5,0 V21.5 H22.5" fill="none" stroke="#2F2F2F" stroke-width="2"/><path d="M1.5,4 H17 M1.5,11 H13 M1.5,15.5 H10" stroke="#1F7BC8" stroke-width="1.1"/><circle cx="18.5" cy="4.5" r="2.5" fill="#8CC2F0" stroke="#1F7BC8" stroke-width="1.2"/><rect x="12.5" y="9.5" width="2.5" height="2.5" fill="#ddd" stroke="#2F2F2F" stroke-width="0.8"/><rect x="9.5" y="14" width="2.5" height="2.5" fill="#ddd" stroke="#2F2F2F" stroke-width="0.8"/></svg>
<svg style="position:absolute;left:1545.3px;top:397.5px;" width="24" height="24" viewBox="0 0 24 24"><rect x="0.5" y="9" width="8" height="5" fill="#8CC2F0" stroke="#1F7BC8" stroke-width="1.3"/><rect x="14.5" y="1" width="8" height="5" fill="#8CC2F0" stroke="#1F7BC8" stroke-width="1.3"/><rect x="14.5" y="9" width="8" height="5" fill="#8CC2F0" stroke="#1F7BC8" stroke-width="1.3"/><rect x="14.5" y="17" width="8" height="5" fill="#8CC2F0" stroke="#1F7BC8" stroke-width="1.3"/><path d="M8.5,11.5 H14.5 M11.5,3.5 V19.5 M11.5,3.5 H14.5 M11.5,19.5 H14.5" stroke="#2F2F2F" stroke-width="1.2" fill="none"/></svg>
<svg style="position:absolute;left:1577.8px;top:397.5px;" width="24" height="24" viewBox="0 0 24 24"><path d="M0.7,1 H22.3 V15.5 H7 L4,20 V15.5 H0.7 Z" fill="#F8F8F8" stroke="#1F7BC8" stroke-width="1.5" stroke-linejoin="round"/></svg>
<svg style="position:absolute;left:1610.2px;top:397.5px;" width="24" height="24" viewBox="0 0 24 24"><path d="M1.5,0.7 H13 L19,6.5 V22.5 H1.5 Z M13,0.7 V6.5 H19" fill="#F8F8F8" stroke="#2F2F2F" stroke-width="1.3"/><circle cx="3" cy="9" r="2" fill="#8CC2F0" stroke="#1F7BC8" stroke-width="1"/><path d="M6,10 H15 M5,13 H12" stroke="#1F7BC8" stroke-width="1.1"/></svg>
<svg style="position:absolute;left:1448.0px;top:430.0px;" width="24" height="24" viewBox="0 0 24 24"><path d="M6,1 H17 V8 Q17,14 11.5,14 Q6,14 6,8 Z" fill="#F8F8F8" stroke="#2F2F2F" stroke-width="1.4"/><path d="M6,3 H1.5 V6 Q2,10 6.5,10 M17,3 H21.5 V6 Q21,10 16.5,10 M11.5,14 V18 M8,18 H15 L16,21 H7 Z" fill="none" stroke="#2F2F2F" stroke-width="1.3"/><path d="M6,1.5 H17 V3.5 H6 Z M7,20 H16 V22.5 H7 Z" fill="#8CC2F0" stroke="#1F7BC8" stroke-width="1.1"/></svg>
<svg style="position:absolute;left:1480.5px;top:430.0px;" width="24" height="24" viewBox="0 0 24 24"><path d="M1.5,0.7 H13 L19,6.5 V22.5 H1.5 Z M13,0.7 V6.5 H19" fill="#F8F8F8" stroke="#2F2F2F" stroke-width="1.3"/><path d="M5,19 V14 M9.5,19 V16 M14,19 V11" stroke="#2F2F2F" stroke-width="2.4"/></svg>
<svg style="position:absolute;left:1512.9px;top:430.0px;" width="24" height="24" viewBox="0 0 24 24"><rect x="1.5" y="4" width="21" height="15" fill="#F8F8F8" stroke="#2F2F2F" stroke-width="1.3"/><text x="12" y="14" font-size="9" font-family="Liberation Sans" fill="#3A96DD" text-anchor="middle">123</text><path d="M3,16.5 H20" stroke="#999" stroke-width="1"/><path transform="translate(0,0) scale(1)" d="M4,0 H10 L6.5,5 H9.5 L1.5,12.5 L4,6.5 H1 Z" fill="#F7C948" stroke="#E8850C" stroke-width="1.1" stroke-linejoin="round"/></svg>
<svg style="position:absolute;left:1545.3px;top:430.0px;" width="24" height="24" viewBox="0 0 24 24"><rect x="1" y="6" width="7" height="7" fill="#eee" stroke="#999" stroke-width="1"/><rect x="1" y="15" width="7" height="7" fill="#eee" stroke="#999" stroke-width="1"/><rect x="12" y="2" width="7" height="7" fill="#eee" stroke="#999" stroke-width="1"/><path transform="translate(0,0) scale(1)" d="M4,0 H10 L6.5,5 H9.5 L1.5,12.5 L4,6.5 H1 Z" fill="#F7C948" stroke="#E8850C" stroke-width="1.1" stroke-linejoin="round"/><path transform="translate(10.5,11)" d="M0.5,0.5 H11.5 V2.5 L7.5,6.5 V11.5 H4.5 V6.5 L0.5,2.5 Z" fill="#F8F8F8" stroke="#2F2F2F" stroke-width="1.4" stroke-linejoin="round"/></svg>
<svg style="position:absolute;left:1577.8px;top:430.0px;" width="24" height="24" viewBox="0 0 24 24"><path d="M4,21.5 V5 H22 V12" fill="none" stroke="#999" stroke-width="1.2"/><text x="11" y="18" font-size="11" font-family="Liberation Sans" fill="#3A96DD" text-anchor="middle">A</text><path transform="translate(0,0) scale(1)" d="M4,0 H10 L6.5,5 H9.5 L1.5,12.5 L4,6.5 H1 Z" fill="#F7C948" stroke="#E8850C" stroke-width="1.1" stroke-linejoin="round"/><path transform="translate(10.5,11)" d="M0.5,0.5 H11.5 V2.5 L7.5,6.5 V11.5 H4.5 V6.5 L0.5,2.5 Z" fill="#F8F8F8" stroke="#2F2F2F" stroke-width="1.4" stroke-linejoin="round"/></svg>
<svg style="position:absolute;left:1610.2px;top:430.0px;" width="24" height="24" viewBox="0 0 24 24"><path d="M3,21.5 V5 H22 V12" fill="none" stroke="#999" stroke-width="1.2"/><path d="M8,8 H16 M6,15 H10" stroke="#999" stroke-width="1.2"/><rect x="4" y="14" width="2" height="2" fill="#999"/><path transform="translate(0,0) scale(1)" d="M4,0 H10 L6.5,5 H9.5 L1.5,12.5 L4,6.5 H1 Z" fill="#F7C948" stroke="#E8850C" stroke-width="1.1" stroke-linejoin="round"/><path transform="translate(10.5,11)" d="M0.5,0.5 H11.5 V2.5 L7.5,6.5 V11.5 H4.5 V6.5 L0.5,2.5 Z" fill="#F8F8F8" stroke="#2F2F2F" stroke-width="1.4" stroke-linejoin="round"/></svg>
<svg style="position:absolute;left:1448.0px;top:462.5px;" width="24" height="24" viewBox="0 0 24 24"><path d="M2,8 V22 H20 V3 H10" fill="none" stroke="#1F7BC8" stroke-width="1.5"/><path d="M3,21 L8,16 L10,12 L16,10 L19,4 V14 L14,17 L12,21 Z" fill="#8CC2F0"/><path d="M1,1.5 Q1,0 3,0 H5 Q7,0 7,1.5 V7 L4,10 L1,7 Z" fill="#D9650E"/><circle cx="4" cy="4" r="1" fill="#fff"/><circle cx="20.5" cy="13.5" r="1.8" fill="#D9650E"/><circle cx="16.5" cy="20.5" r="2.6" fill="#D9650E"/></svg>
<svg style="position:absolute;left:1480.5px;top:462.5px;" width="24" height="24" viewBox="0 0 24 24"><path d="M11.5,1.5 Q12.5,1.5 13.5,2.5 L21,10 Q22.5,11.5 21,13 L13.5,20.5 Q11.5,22.5 9.5,20.5 L2,13 Q0.5,11.5 2,10 L9.5,2.5 Q10.5,1.5 11.5,1.5 Z" fill="none" stroke="#9C3FC2" stroke-width="1.4"/><path d="M6.5,6.5 L16.5,16.5 M16.5,6.5 L6.5,16.5" stroke="#9C3FC2" stroke-width="1.3"/></svg>
<svg style="position:absolute;left:1512.9px;top:462.5px;" width="24" height="24" viewBox="0 0 24 24"><path d="M1,2 H14 L22,11 L14,20 H1 L9,11 Z" fill="#F8F8F8" stroke="#1F7BC8" stroke-width="1.4" stroke-linejoin="round"/><path d="M17,5 L8,20" stroke="#1F7BC8" stroke-width="1.3"/></svg>
<svg style="position:absolute;left:1545.3px;top:462.5px;" width="24" height="24" viewBox="0 0 24 24"><circle cx="5" cy="9.3" r="1.2" fill="#2F2F2F"/><circle cx="11.5" cy="9.3" r="1.2" fill="#2F2F2F"/><circle cx="18" cy="9.3" r="1.2" fill="#2F2F2F"/></svg>
<div style="position:absolute;left:1607px;top:297px;width:30px;height:30px;border:1.3px solid #252423"></div>
<div style="position:absolute;left:1438.50px;top:504.80px;font-size:15px;line-height:19px;white-space:nowrap;color:#252423;transform:scaleX(0.9491);transform-origin:0 0;">Legend</div>
<div style="position:absolute;left:1438px;top:530px;width:205px;height:89px;border:1px dashed #605E5C;border-radius:2px"></div>
<div style="position:absolute;left:1444.5px;top:535.5px;width:191.5px;height:36.0px;background:#FAF9F8;border:1px solid #605E5C;border-radius:4px"></div>
<div style="position:absolute;left:1444.5px;top:577.5px;width:191.5px;height:36.5px;background:#fff;border:1px solid #605E5C;border-radius:3px"></div>
<div style="position:absolute;left:1505.50px;top:586.38px;font-size:15.5px;line-height:19px;white-space:nowrap;color:#252423;-webkit-text-stroke:0.55px #252423;">+Add data</div>
<div style="position:absolute;left:1438.50px;top:630.80px;font-size:15px;line-height:19px;white-space:nowrap;color:#252423;transform:scaleX(0.9252);transform-origin:0 0;">Values</div>
<div style="position:absolute;left:1438px;top:655px;width:205px;height:91px;border:1px dashed #605E5C;border-radius:2px"></div>
<div style="position:absolute;left:1444.5px;top:661.5px;width:191.5px;height:36.5px;background:#FAF9F8;border:1px solid #605E5C;border-radius:4px"></div>
<div style="position:absolute;left:1444.5px;top:703px;width:191.5px;height:36.5px;background:#fff;border:1px solid #605E5C;border-radius:3px"></div>
<div style="position:absolute;left:1505.50px;top:711.88px;font-size:15.5px;line-height:19px;white-space:nowrap;color:#252423;-webkit-text-stroke:0.55px #252423;">+Add data</div>
<div style="position:absolute;left:1438.50px;top:756.80px;font-size:15px;line-height:19px;white-space:nowrap;color:#252423;transform:scaleX(0.9531);transform-origin:0 0;">Details</div>
<div style="position:absolute;left:1438px;top:781px;width:205px;height:49px;border:1px dashed #605E5C;border-radius:2px"></div>
<div style="position:absolute;left:1444.5px;top:787px;width:191.5px;height:36.5px;background:#fff;border:1px solid #605E5C;border-radius:3px"></div>
<div style="position:absolute;left:1505.50px;top:795.88px;font-size:15.5px;line-height:19px;white-space:nowrap;color:#252423;-webkit-text-stroke:0.55px #252423;">+Add data</div>
<div style="position:absolute;left:1438.50px;top:840.80px;font-size:15px;line-height:19px;white-space:nowrap;color:#252423;">Tooltips</div>
<div style="position:absolute;left:1438px;top:865px;width:205px;height:49px;border:1px dashed #605E5C;border-radius:2px"></div>
<div style="position:absolute;left:1444.5px;top:871px;width:191.5px;height:36.5px;background:#fff;border:1px solid #605E5C;border-radius:3px"></div>
<div style="position:absolute;left:1505.50px;top:879.88px;font-size:15.5px;line-height:19px;white-space:nowrap;color:#252423;-webkit-text-stroke:0.55px #252423;">+Add data</div>
<svg style="position:absolute;left:1440px;top:544px;" width="72" height="30" viewBox="0 0 72 30"><path d="M2,7.5 Q20,4.5 45,4 Q58,3.5 68.5,3 V23.5 Q40,24.5 20,25.8 Q8,26.5 2,26.8 Z" fill="#F8E800"/></svg>
<svg style="position:absolute;left:1446px;top:677px;" width="120" height="24" viewBox="0 0 120 24"><path d="M1,2 Q60,1.5 117,2 V21.6 H1 Z" fill="#F8E800"/></svg>
<div style="position:absolute;left:1452.00px;top:545.63px;font-size:15.5px;line-height:19px;white-space:nowrap;color:#252423;transform:scaleX(0.9674);transform-origin:0 0;">Country</div>
<div style="position:absolute;left:1452.00px;top:671.63px;font-size:15.5px;line-height:19px;white-space:nowrap;color:#252423;transform:scaleX(0.9042);transform-origin:0 0;">Sum of GDP (B...</div>
<svg style="position:absolute;left:1573px;top:545px;" width="18" height="18" viewBox="0 0 18 18"><path d="M2,2 L16,16 M16,2 L2,16" stroke="#252423" stroke-width="1.5"/></svg>
<div style="position:absolute;left:1600px;top:544.5px;width:1.2999999999999545px;height:19.5px;background:#605E5C"></div>
<svg style="position:absolute;left:1612px;top:545px;" width="14" height="18" viewBox="0 0 14 18"><path d="M4,2 L11,9 L4,16" fill="none" stroke="#252423" stroke-width="1.4"/></svg>
<svg style="position:absolute;left:1573px;top:671px;" width="18" height="18" viewBox="0 0 18 18"><path d="M2,2 L16,16 M16,2 L2,16" stroke="#252423" stroke-width="1.5"/></svg>
<div style="position:absolute;left:1600px;top:670.5px;width:1.2999999999999545px;height:19.5px;background:#605E5C"></div>
<svg style="position:absolute;left:1612px;top:671px;" width="14" height="18" viewBox="0 0 14 18"><path d="M4,2 L11,9 L4,16" fill="none" stroke="#252423" stroke-width="1.4"/></svg>
<div style="position:absolute;left:1663.50px;top:167.57px;font-size:20px;line-height:25px;white-space:nowrap;color:#252423;font-weight:bold;transform:scaleX(0.9505);transform-origin:0 0;">Data</div>
<div style="position:absolute;left:1824.0px;top:177.5px;width:3px;height:3px;border-radius:50%;background:#252423"></div>
<div style="position:absolute;left:1831.6px;top:177.5px;width:3px;height:3px;border-radius:50%;background:#252423"></div>
<div style="position:absolute;left:1839.2px;top:177.5px;width:3px;height:3px;border-radius:50%;background:#252423"></div>
<svg style="position:absolute;left:1852px;top:170px;" width="20" height="18" viewBox="0 0 20 18"><path d="M3,1.5 L10,9 L3,16.5 M9,1.5 L16,9 L9,16.5" fill="none" stroke="#252423" stroke-width="1.3"/></svg>
<div style="position:absolute;left:1660px;top:213px;width:213.5px;height:28.5px;background:#fff;border:1px solid #C8C6C4;border-bottom:1.3px solid #605E5C;border-radius:4px"></div>
<svg style="position:absolute;left:1674px;top:218px;" width="19" height="19" viewBox="0 0 19 19"><circle cx="7.5" cy="7.5" r="6" fill="none" stroke="#252423" stroke-width="1.3"/><path d="M12,12 L17.5,17.5" stroke="#252423" stroke-width="1.4"/></svg>
<div style="position:absolute;left:1702.00px;top:218.11px;font-size:17px;line-height:21px;white-space:nowrap;color:#605E5C;transform:scaleX(0.9339);transform-origin:0 0;">Search</div>
<div style="position:absolute;left:1864px;top:252px;width:10px;height:105px;background:#8A8886;border-radius:1px"></div>
<svg style="position:absolute;left:1671px;top:260.7px;" width="12" height="16" viewBox="0 0 12 16"><path d="M3,1.5 L9.5,8 L3,14.5" fill="none" stroke="#252423" stroke-width="1.3"/></svg>
<svg style="position:absolute;left:1690px;top:261.2px;" width="17" height="17" viewBox="0 0 17 17"><rect x="1.2" y="1.2" width="13.5" height="13" rx="2.5" fill="none" stroke="#252423" stroke-width="1.6"/><path d="M5.7,1.2 V14.2 M10.2,1.2 V14.2 M1.2,5.5 H14.7 M1.2,9.8 H14.7" stroke="#252423" stroke-width="1.4"/></svg>
<div style="position:absolute;left:1713.30px;top:259.13px;font-size:15.5px;line-height:19px;white-space:nowrap;color:#252423;transform:scaleX(0.9024);transform-origin:0 0;">Ashishdata</div>
<svg style="position:absolute;left:1671px;top:290.7px;" width="12" height="16" viewBox="0 0 12 16"><path d="M3,1.5 L9.5,8 L3,14.5" fill="none" stroke="#252423" stroke-width="1.3"/></svg>
<svg style="position:absolute;left:1690px;top:291.2px;" width="17" height="17" viewBox="0 0 17 17"><rect x="1.2" y="1.2" width="13.5" height="13" rx="2.5" fill="none" stroke="#252423" stroke-width="1.6"/><path d="M5.7,1.2 V14.2 M10.2,1.2 V14.2 M1.2,5.5 H14.7 M1.2,9.8 H14.7" stroke="#252423" stroke-width="1.4"/></svg>
<div style="position:absolute;left:1713.30px;top:289.13px;font-size:15.5px;line-height:19px;white-space:nowrap;color:#252423;transform:scaleX(0.9336);transform-origin:0 0;">Branch details</div>
<svg style="position:absolute;left:1671px;top:320.7px;" width="12" height="16" viewBox="0 0 12 16"><path d="M3,1.5 L9.5,8 L3,14.5" fill="none" stroke="#252423" stroke-width="1.3"/></svg>
<svg style="position:absolute;left:1690px;top:320.2px;" width="19" height="19" viewBox="0 0 19 19"><path d="M9.5,15 H3.5 Q1,15 1,12.5 V3.5 Q1,1 3.5,1 H12.5 Q15,1 15,3.5 V5" fill="none" stroke="#252423" stroke-width="1.5"/><path d="M5,1 V15 M1,5 H9.5 M1,10.5 H9.5" stroke="#252423" stroke-width="1.4"/><rect x="9.7" y="5.7" width="8.3" height="11.8" rx="1.6" fill="#9a9a9a" stroke="#252423" stroke-width="1.5"/><rect x="10.9" y="6.9" width="5.9" height="2.4" fill="#fff"/><path d="M9.7,9.8 H18 M9.7,13.6 H18 M13.85,9.8 V17.5" stroke="#252423" stroke-width="1.2"/></svg>
<div style="position:absolute;left:1713.30px;top:319.13px;font-size:15.5px;line-height:19px;white-space:nowrap;color:#252423;transform:scaleX(0.9334);transform-origin:0 0;">Calculated Table</div>
<svg style="position:absolute;left:1671px;top:350.7px;" width="12" height="16" viewBox="0 0 12 16"><path d="M3,1.5 L9.5,8 L3,14.5" fill="none" stroke="#252423" stroke-width="1.3"/></svg>
<svg style="position:absolute;left:1690px;top:350.2px;" width="19" height="19" viewBox="0 0 19 19"><path d="M9.5,15 H3.5 Q1,15 1,12.5 V3.5 Q1,1 3.5,1 H12.5 Q15,1 15,3.5 V5" fill="none" stroke="#252423" stroke-width="1.5"/><path d="M5,1 V15 M1,5 H9.5 M1,10.5 H9.5" stroke="#252423" stroke-width="1.4"/><rect x="9.7" y="5.7" width="8.3" height="11.8" rx="1.6" fill="#9a9a9a" stroke="#252423" stroke-width="1.5"/><rect x="10.9" y="6.9" width="5.9" height="2.4" fill="#fff"/><path d="M9.7,9.8 H18 M9.7,13.6 H18 M13.85,9.8 V17.5" stroke="#252423" stroke-width="1.2"/></svg>
<div style="position:absolute;left:1713.30px;top:349.13px;font-size:15.5px;line-height:19px;white-space:nowrap;color:#252423;transform:scaleX(0.8566);transform-origin:0 0;">Class</div>
<div style="position:absolute;left:1661px;top:373px;width:202px;height:30px;background:#E1DFDD;border-radius:4px"></div>
<div style="position:absolute;left:1661px;top:373px;width:3.5px;height:30px;background:#117865;border-radius:2px 0 0 2px"></div>
<svg style="position:absolute;left:1669px;top:381px;" width="18" height="12" viewBox="0 0 18 12"><path d="M2,3 L8.5,9.5 L15,3" fill="none" stroke="#252423" stroke-width="1.3"/></svg>
<svg style="position:absolute;left:1690px;top:381px;" width="17" height="17" viewBox="0 0 17 17"><rect x="1.2" y="1.2" width="13.5" height="13" rx="2.5" fill="none" stroke="#252423" stroke-width="1.6"/><path d="M5.7,1.2 V14.2 M10.2,1.2 V14.2 M1.2,5.5 H14.7 M1.2,9.8 H14.7" stroke="#252423" stroke-width="1.4"/></svg>
<div style="position:absolute;left:1697.4px;top:387.3px;width:16px;height:16px;border-radius:50%;background:#117865;border:1.3px solid #F3F2F1"></div>
<svg style="position:absolute;left:1701px;top:391.5px;" width="9" height="8" viewBox="0 0 9 8"><path d="M1.5,4 L3.5,6 L7.5,2" fill="none" stroke="#fff" stroke-width="1.3"/></svg>
<div style="position:absolute;left:1713.30px;top:379.13px;font-size:15.5px;line-height:19px;white-space:nowrap;color:#252423;transform:scaleX(0.9377);transform-origin:0 0;">Countries</div>
<div style="position:absolute;left:1709px;top:411.2px;width:15px;height:15.0px;background:#fff;border:1px solid #8A8886;border-radius:2px"></div>
<svg style="position:absolute;left:1734px;top:410.7px;" width="16" height="16" viewBox="0 0 16 16"><path d="M13.5,2 H2 L8,8 L2,14 H13.5" fill="none" stroke="#252423" stroke-width="1.3"/></svg>
<div style="position:absolute;left:1756.50px;top:409.13px;font-size:15.5px;line-height:19px;white-space:nowrap;color:#252423;transform:scaleX(0.9413);transform-origin:0 0;">Area (sq km)</div>
<div style="position:absolute;left:1709px;top:441.2px;width:15px;height:15.0px;background:#117865;border-radius:2px"></div>
<svg style="position:absolute;left:1709px;top:441.2px;" width="15" height="15" viewBox="0 0 15 15"><path d="M3.5,7.5 L6.3,10.3 L11.5,4.8" fill="none" stroke="#fff" stroke-width="1.5"/></svg>
<div style="position:absolute;left:1756.50px;top:439.13px;font-size:15.5px;line-height:19px;white-space:nowrap;color:#252423;transform:scaleX(0.9582);transform-origin:0 0;">Country</div>
<div style="position:absolute;left:1709px;top:471.2px;width:15px;height:15.0px;background:#117865;border-radius:2px"></div>
<svg style="position:absolute;left:1709px;top:471.2px;" width="15" height="15" viewBox="0 0 15 15"><path d="M3.5,7.5 L6.3,10.3 L11.5,4.8" fill="none" stroke="#fff" stroke-width="1.5"/></svg>
<svg style="position:absolute;left:1734px;top:470.7px;" width="16" height="16" viewBox="0 0 16 16"><path d="M13.5,2 H2 L8,8 L2,14 H13.5" fill="none" stroke="#252423" stroke-width="1.3"/></svg>
<div style="position:absolute;left:1756.50px;top:469.13px;font-size:15.5px;line-height:19px;white-space:nowrap;color:#252423;transform:scaleX(0.9196);transform-origin:0 0;">GDP (Billion U...</div>
<div style="position:absolute;left:1709px;top:501.2px;width:15px;height:15.000000000000057px;background:#fff;border:1px solid #8A8886;border-radius:2px"></div>
<svg style="position:absolute;left:1734px;top:500.7px;" width="16" height="16" viewBox="0 0 16 16"><path d="M13.5,2 H2 L8,8 L2,14 H13.5" fill="none" stroke="#252423" stroke-width="1.3"/></svg>
<div style="position:absolute;left:1756.50px;top:499.13px;font-size:15.5px;line-height:19px;white-space:nowrap;color:#252423;transform:scaleX(0.9103);transform-origin:0 0;">Literacy Rate (...</div>
<div style="position:absolute;left:1709px;top:531.2px;width:15px;height:15.0px;background:#fff;border:1px solid #8A8886;border-radius:2px"></div>
<svg style="position:absolute;left:1734px;top:530.7px;" width="16" height="16" viewBox="0 0 16 16"><path d="M13.5,2 H2 L8,8 L2,14 H13.5" fill="none" stroke="#252423" stroke-width="1.3"/></svg>
<div style="position:absolute;left:1756.50px;top:529.13px;font-size:15.5px;line-height:19px;white-space:nowrap;color:#252423;transform:scaleX(0.9581);transform-origin:0 0;">Population (M...</div>
<div style="position:absolute;left:1709px;top:561.2px;width:15px;height:15.0px;background:#fff;border:1px solid #8A8886;border-radius:2px"></div>
<svg style="position:absolute;left:1734px;top:560.7px;" width="16" height="16" viewBox="0 0 16 16"><path d="M13.5,2 H2 L8,8 L2,14 H13.5" fill="none" stroke="#252423" stroke-width="1.3"/></svg>
<div style="position:absolute;left:1756.50px;top:559.13px;font-size:15.5px;line-height:19px;white-space:nowrap;color:#252423;transform:scaleX(0.8941);transform-origin:0 0;">Year</div>
<svg style="position:absolute;left:1671px;top:590.7px;" width="12" height="16" viewBox="0 0 12 16"><path d="M3,1.5 L9.5,8 L3,14.5" fill="none" stroke="#252423" stroke-width="1.3"/></svg>
<svg style="position:absolute;left:1690px;top:590.2px;" width="19" height="19" viewBox="0 0 19 19"><path d="M9.5,15 H3.5 Q1,15 1,12.5 V3.5 Q1,1 3.5,1 H12.5 Q15,1 15,3.5 V5" fill="none" stroke="#252423" stroke-width="1.5"/><path d="M5,1 V15 M1,5 H9.5 M1,10.5 H9.5" stroke="#252423" stroke-width="1.4"/><rect x="9.7" y="5.7" width="8.3" height="11.8" rx="1.6" fill="#9a9a9a" stroke="#252423" stroke-width="1.5"/><rect x="10.9" y="6.9" width="5.9" height="2.4" fill="#fff"/><path d="M9.7,9.8 H18 M9.7,13.6 H18 M13.85,9.8 V17.5" stroke="#252423" stroke-width="1.2"/></svg>
<div style="position:absolute;left:1713.30px;top:589.13px;font-size:15.5px;line-height:19px;white-space:nowrap;color:#252423;transform:scaleX(0.9327);transform-origin:0 0;">Countries Average T...</div>
<svg style="position:absolute;left:1671px;top:620.7px;" width="12" height="16" viewBox="0 0 12 16"><path d="M3,1.5 L9.5,8 L3,14.5" fill="none" stroke="#252423" stroke-width="1.3"/></svg>
<svg style="position:absolute;left:1690px;top:621.2px;" width="17" height="17" viewBox="0 0 17 17"><rect x="1.2" y="1.2" width="13.5" height="13" rx="2.5" fill="none" stroke="#252423" stroke-width="1.6"/><path d="M5.7,1.2 V14.2 M10.2,1.2 V14.2 M1.2,5.5 H14.7 M1.2,9.8 H14.7" stroke="#252423" stroke-width="1.4"/></svg>
<div style="position:absolute;left:1713.30px;top:619.13px;font-size:15.5px;line-height:19px;white-space:nowrap;color:#252423;transform:scaleX(0.9657);transform-origin:0 0;">Countrylist</div>
<svg style="position:absolute;left:1671px;top:650.7px;" width="12" height="16" viewBox="0 0 12 16"><path d="M3,1.5 L9.5,8 L3,14.5" fill="none" stroke="#252423" stroke-width="1.3"/></svg>
<svg style="position:absolute;left:1690px;top:651.2px;" width="17" height="17" viewBox="0 0 17 17"><rect x="1.2" y="1.2" width="13.5" height="13" rx="2.5" fill="none" stroke="#252423" stroke-width="1.6"/><path d="M5.7,1.2 V14.2 M10.2,1.2 V14.2 M1.2,5.5 H14.7 M1.2,9.8 H14.7" stroke="#252423" stroke-width="1.4"/></svg>
<div style="position:absolute;left:1713.30px;top:649.13px;font-size:15.5px;line-height:19px;white-space:nowrap;color:#252423;transform:scaleX(0.9035);transform-origin:0 0;">Customers</div>
<svg style="position:absolute;left:1671px;top:680.7px;" width="12" height="16" viewBox="0 0 12 16"><path d="M3,1.5 L9.5,8 L3,14.5" fill="none" stroke="#252423" stroke-width="1.3"/></svg>
<svg style="position:absolute;left:1690px;top:681.2px;" width="17" height="17" viewBox="0 0 17 17"><rect x="1.2" y="1.2" width="13.5" height="13" rx="2.5" fill="none" stroke="#252423" stroke-width="1.6"/><path d="M5.7,1.2 V14.2 M10.2,1.2 V14.2 M1.2,5.5 H14.7 M1.2,9.8 H14.7" stroke="#252423" stroke-width="1.4"/></svg>
<div style="position:absolute;left:1713.30px;top:679.13px;font-size:15.5px;line-height:19px;white-space:nowrap;color:#252423;transform:scaleX(0.9306);transform-origin:0 0;">CustomersData</div>
<svg style="position:absolute;left:1671px;top:710.7px;" width="12" height="16" viewBox="0 0 12 16"><path d="M3,1.5 L9.5,8 L3,14.5" fill="none" stroke="#252423" stroke-width="1.3"/></svg>
<svg style="position:absolute;left:1690px;top:711.2px;" width="17" height="17" viewBox="0 0 17 17"><rect x="1.2" y="1.2" width="13.5" height="13" rx="2.5" fill="none" stroke="#252423" stroke-width="1.6"/><path d="M5.7,1.2 V14.2 M10.2,1.2 V14.2 M1.2,5.5 H14.7 M1.2,9.8 H14.7" stroke="#252423" stroke-width="1.4"/></svg>
<div style="position:absolute;left:1713.30px;top:709.13px;font-size:15.5px;line-height:19px;white-space:nowrap;color:#252423;transform:scaleX(0.9115);transform-origin:0 0;">Data1</div>
<svg style="position:absolute;left:1671px;top:740.7px;" width="12" height="16" viewBox="0 0 12 16"><path d="M3,1.5 L9.5,8 L3,14.5" fill="none" stroke="#252423" stroke-width="1.3"/></svg>
<svg style="position:absolute;left:1690px;top:741.2px;" width="17" height="17" viewBox="0 0 17 17"><rect x="1.2" y="1.2" width="13.5" height="13" rx="2.5" fill="none" stroke="#252423" stroke-width="1.6"/><path d="M5.7,1.2 V14.2 M10.2,1.2 V14.2 M1.2,5.5 H14.7 M1.2,9.8 H14.7" stroke="#252423" stroke-width="1.4"/></svg>
<div style="position:absolute;left:1713.30px;top:739.13px;font-size:15.5px;line-height:19px;white-space:nowrap;color:#252423;transform:scaleX(0.9115);transform-origin:0 0;">Data2</div>
<svg style="position:absolute;left:1671px;top:770.7px;" width="12" height="16" viewBox="0 0 12 16"><path d="M3,1.5 L9.5,8 L3,14.5" fill="none" stroke="#252423" stroke-width="1.3"/></svg>
<svg style="position:absolute;left:1690px;top:770.2px;" width="19" height="19" viewBox="0 0 19 19"><path d="M9.5,15 H3.5 Q1,15 1,12.5 V3.5 Q1,1 3.5,1 H12.5 Q15,1 15,3.5 V5" fill="none" stroke="#252423" stroke-width="1.5"/><path d="M5,1 V15 M1,5 H9.5 M1,10.5 H9.5" stroke="#252423" stroke-width="1.4"/><rect x="9.7" y="5.7" width="8.3" height="11.8" rx="1.6" fill="#9a9a9a" stroke="#252423" stroke-width="1.5"/><rect x="10.9" y="6.9" width="5.9" height="2.4" fill="#fff"/><path d="M9.7,9.8 H18 M9.7,13.6 H18 M13.85,9.8 V17.5" stroke="#252423" stroke-width="1.2"/></svg>
<div style="position:absolute;left:1713.30px;top:769.13px;font-size:15.5px;line-height:19px;white-space:nowrap;color:#252423;transform:scaleX(0.8570);transform-origin:0 0;">DATESBETWEEN Table</div>
<svg style="position:absolute;left:1671px;top:800.7px;" width="12" height="16" viewBox="0 0 12 16"><path d="M3,1.5 L9.5,8 L3,14.5" fill="none" stroke="#252423" stroke-width="1.3"/></svg>
<svg style="position:absolute;left:1690px;top:800.2px;" width="19" height="19" viewBox="0 0 19 19"><path d="M9.5,15 H3.5 Q1,15 1,12.5 V3.5 Q1,1 3.5,1 H12.5 Q15,1 15,3.5 V5" fill="none" stroke="#252423" stroke-width="1.5"/><path d="M5,1 V15 M1,5 H9.5 M1,10.5 H9.5" stroke="#252423" stroke-width="1.4"/><rect x="9.7" y="5.7" width="8.3" height="11.8" rx="1.6" fill="#9a9a9a" stroke="#252423" stroke-width="1.5"/><rect x="10.9" y="6.9" width="5.9" height="2.4" fill="#fff"/><path d="M9.7,9.8 H18 M9.7,13.6 H18 M13.85,9.8 V17.5" stroke="#252423" stroke-width="1.2"/></svg>
<div style="position:absolute;left:1713.30px;top:799.13px;font-size:15.5px;line-height:19px;white-space:nowrap;color:#252423;transform:scaleX(0.8749);transform-origin:0 0;">DATESINPERIOD Table</div>
<svg style="position:absolute;left:1671px;top:830.7px;" width="12" height="16" viewBox="0 0 12 16"><path d="M3,1.5 L9.5,8 L3,14.5" fill="none" stroke="#252423" stroke-width="1.3"/></svg>
<svg style="position:absolute;left:1690px;top:830.2px;" width="19" height="19" viewBox="0 0 19 19"><path d="M9.5,15 H3.5 Q1,15 1,12.5 V3.5 Q1,1 3.5,1 H12.5 Q15,1 15,3.5 V5" fill="none" stroke="#252423" stroke-width="1.5"/><path d="M5,1 V15 M1,5 H9.5 M1,10.5 H9.5" stroke="#252423" stroke-width="1.4"/><rect x="9.7" y="5.7" width="8.3" height="11.8" rx="1.6" fill="#9a9a9a" stroke="#252423" stroke-width="1.5"/><rect x="10.9" y="6.9" width="5.9" height="2.4" fill="#fff"/><path d="M9.7,9.8 H18 M9.7,13.6 H18 M13.85,9.8 V17.5" stroke="#252423" stroke-width="1.2"/></svg>
<div style="position:absolute;left:1713.30px;top:829.13px;font-size:15.5px;line-height:19px;white-space:nowrap;color:#252423;transform:scaleX(0.8923);transform-origin:0 0;">DATESMTD Table</div>
<svg style="position:absolute;left:1671px;top:860.7px;" width="12" height="16" viewBox="0 0 12 16"><path d="M3,1.5 L9.5,8 L3,14.5" fill="none" stroke="#252423" stroke-width="1.3"/></svg>
<svg style="position:absolute;left:1690px;top:861.2px;" width="17" height="17" viewBox="0 0 17 17"><rect x="1.2" y="1.2" width="13.5" height="13" rx="2.5" fill="none" stroke="#252423" stroke-width="1.6"/><path d="M5.7,1.2 V14.2 M10.2,1.2 V14.2 M1.2,5.5 H14.7 M1.2,9.8 H14.7" stroke="#252423" stroke-width="1.4"/></svg>
<div style="position:absolute;left:1713.30px;top:859.13px;font-size:15.5px;line-height:19px;white-space:nowrap;color:#252423;transform:scaleX(0.9826);transform-origin:0 0;">df</div>
<svg style="position:absolute;left:1671px;top:890.7px;" width="12" height="16" viewBox="0 0 12 16"><path d="M3,1.5 L9.5,8 L3,14.5" fill="none" stroke="#252423" stroke-width="1.3"/></svg>
<svg style="position:absolute;left:1690px;top:890.2px;" width="19" height="19" viewBox="0 0 19 19"><path d="M9.5,15 H3.5 Q1,15 1,12.5 V3.5 Q1,1 3.5,1 H12.5 Q15,1 15,3.5 V5" fill="none" stroke="#252423" stroke-width="1.5"/><path d="M5,1 V15 M1,5 H9.5 M1,10.5 H9.5" stroke="#252423" stroke-width="1.4"/><rect x="9.7" y="5.7" width="8.3" height="11.8" rx="1.6" fill="#9a9a9a" stroke="#252423" stroke-width="1.5"/><rect x="10.9" y="6.9" width="5.9" height="2.4" fill="#fff"/><path d="M9.7,9.8 H18 M9.7,13.6 H18 M13.85,9.8 V17.5" stroke="#252423" stroke-width="1.2"/></svg>
<div style="position:absolute;left:1713.30px;top:889.13px;font-size:15.5px;line-height:19px;white-space:nowrap;color:#252423;transform:scaleX(0.8949);transform-origin:0 0;">DISTINCT Values Table</div>
<svg style="position:absolute;left:1671px;top:920.7px;" width="12" height="16" viewBox="0 0 12 16"><path d="M3,1.5 L9.5,8 L3,14.5" fill="none" stroke="#252423" stroke-width="1.3"/></svg>
<svg style="position:absolute;left:1690px;top:920.2px;" width="19" height="19" viewBox="0 0 19 19"><path d="M9.5,15 H3.5 Q1,15 1,12.5 V3.5 Q1,1 3.5,1 H12.5 Q15,1 15,3.5 V5" fill="none" stroke="#252423" stroke-width="1.5"/><path d="M5,1 V15 M1,5 H9.5 M1,10.5 H9.5" stroke="#252423" stroke-width="1.4"/><rect x="9.7" y="5.7" width="8.3" height="11.8" rx="1.6" fill="#9a9a9a" stroke="#252423" stroke-width="1.5"/><rect x="10.9" y="6.9" width="5.9" height="2.4" fill="#fff"/><path d="M9.7,9.8 H18 M9.7,13.6 H18 M13.85,9.8 V17.5" stroke="#252423" stroke-width="1.2"/></svg>
<div style="position:absolute;left:1713.30px;top:919.13px;font-size:15.5px;line-height:19px;white-space:nowrap;color:#252423;transform:scaleX(0.9347);transform-origin:0 0;">Filtered Table</div>
<div style="position:absolute;left:1880px;top:155px;width:38px;height:41px;background:#E1DFDD;border:1px solid #8A8886;border-right:none;border-top:none"></div>
<div style="position:absolute;left:1880px;top:196px;width:38px;height:39px;background:#E1DFDD;border:1px solid #8A8886;border-right:none;border-top:none"></div>
<svg style="position:absolute;left:1890px;top:163px;" width="21" height="25" viewBox="0 0 21 25"><ellipse cx="10.5" cy="4.5" rx="9" ry="3.3" fill="#fff" stroke="#252423" stroke-width="1.4"/><path d="M1.5,4.5 V19.5 Q1.5,23 10.5,23 Q19.5,23 19.5,19.5 V4.5" fill="#fff" stroke="#252423" stroke-width="1.4"/><ellipse cx="10.5" cy="4.5" rx="9" ry="3.3" fill="#fff" stroke="#252423" stroke-width="1.4"/></svg>
<svg style="position:absolute;left:1889px;top:203px;" width="26" height="26" viewBox="0 0 26 26"><path d="M2,23.5 V10 H7 V23.5 M7,23.5 V2 H12.5 V8 M12.5,6 H16.5 V8" fill="none" stroke="#252423" stroke-width="1.3"/><path d="M2,23.5 H12" stroke="#252423" stroke-width="1.3"/><ellipse cx="18.5" cy="11.5" rx="5.5" ry="2.3" fill="#fff" stroke="#E8700C" stroke-width="1.3"/><path d="M13,11.5 V21.5 Q13,24 18.5,24 Q24,24 24,21.5 V11.5" fill="#fff" stroke="#E8700C" stroke-width="1.3"/></svg>
<svg style="position:absolute;left:1889px;top:243px;" width="26" height="26" viewBox="0 0 26 26"><path d="M2,23 V10 H7 V23 M7,14 V2 H12.5 V8 M12.5,6 H16.5 V8" fill="none" stroke="#252423" stroke-width="1.3"/><path d="M24,9 L12,19" stroke="#252423" stroke-width="2.2"/><path d="M11,17 Q7,19 6,24 Q12,24 14,20 Z" fill="#3A96DD" stroke="#1F6FB5" stroke-width="0.8"/></svg>
<svg style="position:absolute;left:1891px;top:283px;" width="17" height="25" viewBox="0 0 17 25"><path d="M1.5,1.5 H15.5 V23 L8.5,16.5 L1.5,23 Z" fill="none" stroke="#252423" stroke-width="1.4" stroke-linejoin="round"/></svg>
<svg style="position:absolute;left:1888px;top:322px;" width="27" height="27" viewBox="0 0 27 27"><path d="M3,8 Q5,2 11,3 M11,3 L9,0.5 M11,3 L8,5.5" fill="none" stroke="#2E9C48" stroke-width="1.5"/><path d="M14,9 Q12,15 5,14 M5,14 L7.5,11.5 M5,14 L7.5,16.5" fill="none" stroke="#2E9C48" stroke-width="1.5"/><path d="M14,4 H24 M14,8 H18 M2,18 V25 H13 M2,18 H12" fill="none" stroke="#252423" stroke-width="1.3"/><path d="M14,13 H25.5 V15 L21.5,19 V25 H18 V19 L14,15 Z" fill="#fff" stroke="#252423" stroke-width="1.3" stroke-linejoin="round"/></svg>
<svg style="position:absolute;left:1888px;top:362px;" width="27" height="27" viewBox="0 0 27 27"><rect x="12" y="2" width="12" height="12" fill="#F7D08A" stroke="#E8850C" stroke-width="1.3"/><rect x="2" y="10" width="14" height="13" fill="#fff" stroke="#252423" stroke-width="1.3"/><path d="M13,8 L13,24 L17,20 L20,26 L22.5,25 L19.5,19 L25,19 Z" fill="#fff" stroke="#252423" stroke-width="1.3" stroke-linejoin="round"/></svg>
<svg style="position:absolute;left:1888px;top:404px;" width="24" height="24" viewBox="0 0 24 24"><path d="M12,1 V23 M1,12 H23" stroke="#252423" stroke-width="1.6"/></svg>
<div style="position:absolute;left:1880px;top:905px;width:38px;height:1px;background:#E1DFDD"></div>
<svg style="position:absolute;left:1887px;top:912px;" width="27" height="27" viewBox="0 0 27 27"><path d="M21.47,10.28 L25.04,11.05 L25.04,15.95 L21.47,16.72 L20.28,18.79 L21.40,22.27 L17.15,24.72 L14.70,22.02 L12.30,22.02 L9.85,24.72 L5.60,22.27 L6.72,18.79 L5.53,16.72 L1.96,15.95 L1.96,11.05 L5.53,10.28 L6.72,8.21 L5.60,4.73 L9.85,2.28 L12.30,4.98 L14.70,4.98 L17.15,2.28 L21.40,4.73 L20.28,8.21 Z" fill="none" stroke="#252423" stroke-width="1.6" stroke-linejoin="round"/><circle cx="13.5" cy="13.5" r="3.6" fill="none" stroke="#252423" stroke-width="1.6"/></svg>
<div style="position:absolute;left:0px;top:155px;width:1918px;height:8px;background:linear-gradient(rgba(0,0,0,0.10),rgba(0,0,0,0.035) 45%,rgba(0,0,0,0));z-index:5"></div>
</body></html>
